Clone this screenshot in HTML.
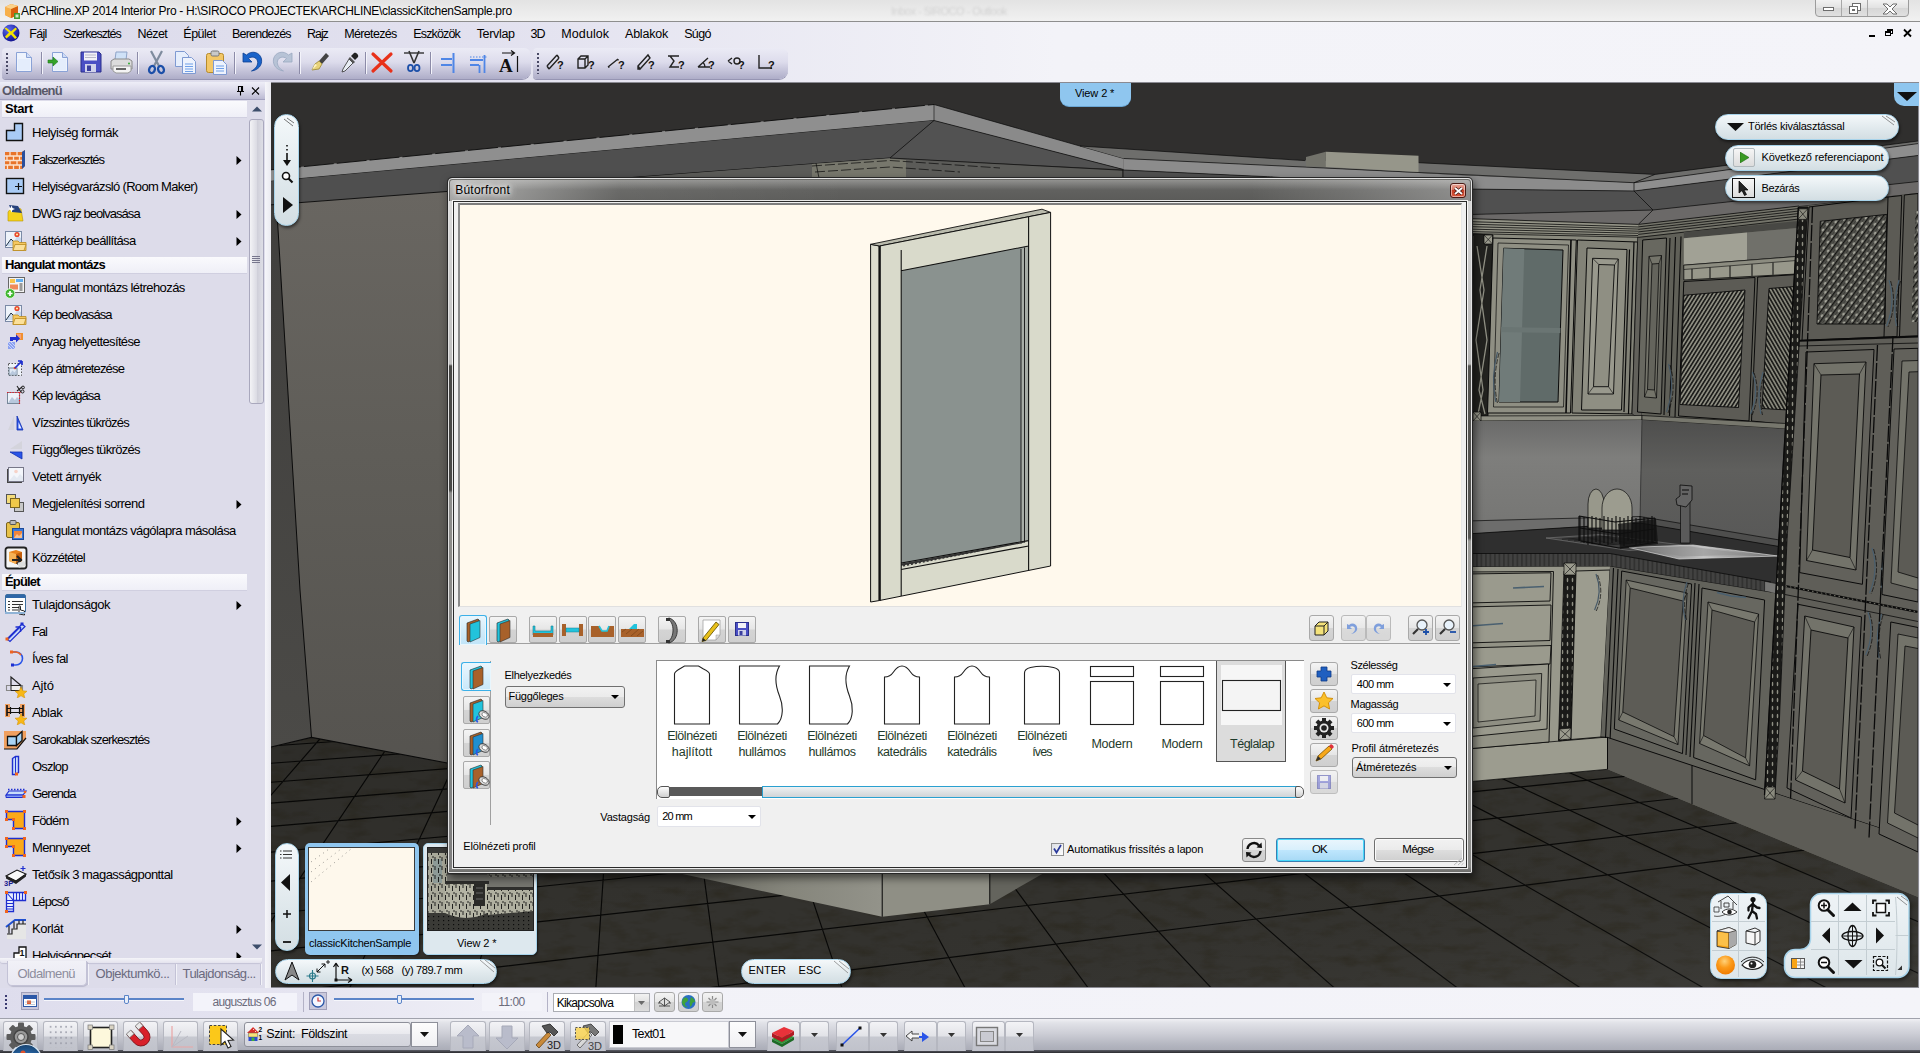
<!DOCTYPE html><html lang="hu"><head><meta charset="utf-8"><title>ARCHline.XP 2014 Interior Pro</title><style>
html,body{margin:0;padding:0;background:#f3f3f8;}
body{width:1920px;height:1053px;position:relative;overflow:hidden;font-family:"Liberation Sans",sans-serif;font-size:12px;color:#000;}
div,span,svg{position:absolute;box-sizing:border-box;}
span{white-space:nowrap;line-height:1;}
.t{font-size:12px;letter-spacing:-0.5px;}
.m{font-size:13px;letter-spacing:-0.5px;}
.d{font-size:11px;letter-spacing:-0.15px;}
.h{font-size:13px;font-weight:bold;letter-spacing:-0.55px;}
.tb{border:1px solid #a9a9a9;border-radius:3px;background:linear-gradient(#f4f4f4 0%,#e6e6e6 48%,#d4d4d4 52%,#cfcfcf 100%);}
.pill{background:linear-gradient(#f4f8fa,#dfe8ec 60%,#d3dee3);border:1.5px solid #a7d3ea;border-radius:14px;box-shadow:1px 2px 3px rgba(0,0,0,.5);}
</style></head><body>
<div style="left:0px;top:0px;width:1920px;height:22px;background:linear-gradient(#e3e3e3,#f1f1f1);border-bottom:1px solid #8e8e8e;"></div>
<span class="t" style="left:891px;top:6px;color:#d2d2d2;filter:blur(1.2px);font-size:11px;">Inbox - SIROCO - Outlook</span>
<svg style="left:3px;top:2px" width="18" height="18" viewBox="0 0 18 18"><path d="M2 5l6-3 7 2v9l-7 3-6-3z" fill="#f28a1c"/><path d="M2 5l6 2v9l-6-3z" fill="#f7b04a"/><path d="M8 7l7-3v9l-7 3z" fill="#d8600c"/><path d="M2 5l6-3 7 2-7 3z" fill="#fbd28a"/><rect x="11" y="11" width="6" height="6" fill="#3f9a2e"/><rect x="12.5" y="12.5" width="3" height="3" fill="#cfe8c8"/></svg>
<span class="t" style="left:21px;top:5px;color:#000;text-shadow:0 0 4px #fff;letter-spacing:-0.32px;">ARCHline.XP 2014 Interior Pro - H:\SIROCO PROJECTEK\ARCHLINE\classicKitchenSample.pro</span>
<div style="left:1815px;top:-1px;width:94px;height:18px;border:1px solid #9c9c9c;border-radius:0 0 4px 4px;background:linear-gradient(#f2f2f2,#e2e2e2 50%,#d6d6d6 50%,#e0e0e0);"></div>
<div style="left:1841px;top:0px;width:1px;height:16px;background:#a8a8a8;"></div>
<div style="left:1867px;top:0px;width:1px;height:16px;background:#a8a8a8;"></div>
<svg style="left:1815px;top:0" width="94" height="17" viewBox="0 0 94 17"><rect x="8.5" y="7.5" width="10" height="3" fill="#fff" stroke="#6d6d6d"/><rect x="37.5" y="3.5" width="8" height="7" fill="#fff" stroke="#6d6d6d"/><rect x="34.5" y="6.5" width="8" height="7" fill="#fff" stroke="#6d6d6d"/><rect x="37" y="9" width="3" height="2" fill="#6d6d6d"/><path d="M68 4l4 0 3 3 3-3 4 0-5 5 5 5-4 0-3-3-3 3-4 0 5-5z" fill="#fff" stroke="#6d6d6d" stroke-width="1"/></svg>
<div style="left:0px;top:22px;width:1920px;height:60px;background:linear-gradient(to right,#dcdbeb 0%,#e2e1ef 25%,#f3f3f8 55%,#f4f4f9 100%);"></div>
<svg style="left:1px;top:23px" width="20" height="20" viewBox="0 0 20 20"><defs><radialGradient id="gb" cx="35%" cy="30%" r="75%"><stop offset="0" stop-color="#5a6af0"/><stop offset="1" stop-color="#10108c"/></radialGradient></defs><circle cx="10" cy="10" r="8.5" fill="url(#gb)"/><path d="M5 4.5l5 4 4.5-4 1.5 1.5-4 4 4 4.5-2 1.5-4-4.5-4.5 4-1.5-2 4-4-4.5-4z" fill="#f5e400"/></svg>
<span class="t" style="left:29.2px;top:28px;font-size:12.5px;letter-spacing:-0.66px;">Fájl</span>
<span class="t" style="left:63.3px;top:28px;font-size:12.5px;letter-spacing:-0.96px;">Szerkesztés</span>
<span class="t" style="left:137.5px;top:28px;font-size:12.5px;letter-spacing:-0.61px;">Nézet</span>
<span class="t" style="left:183.3px;top:28px;font-size:12.5px;letter-spacing:-0.49px;">Épület</span>
<span class="t" style="left:232px;top:28px;font-size:12.5px;letter-spacing:-0.79px;">Berendezés</span>
<span class="t" style="left:307px;top:28px;font-size:12.5px;letter-spacing:-1.05px;">Rajz</span>
<span class="t" style="left:344.2px;top:28px;font-size:12.5px;letter-spacing:-0.65px;">Méretezés</span>
<span class="t" style="left:413.3px;top:28px;font-size:12.5px;letter-spacing:-0.85px;">Eszközök</span>
<span class="t" style="left:476.7px;top:28px;font-size:12.5px;letter-spacing:-0.34px;">Tervlap</span>
<span class="t" style="left:530.4px;top:28px;font-size:12.5px;letter-spacing:-0.89px;">3D</span>
<span class="t" style="left:561.3px;top:28px;font-size:12.5px;letter-spacing:0.09px;">Modulok</span>
<span class="t" style="left:625px;top:28px;font-size:12.5px;letter-spacing:-0.21px;">Ablakok</span>
<span class="t" style="left:684.2px;top:28px;font-size:12.5px;letter-spacing:-0.65px;">Súgó</span>
<svg style="left:1866px;top:27px" width="50" height="12" viewBox="0 0 50 12"><rect x="3" y="8" width="6" height="2" fill="#000"/><rect x="21.5" y="2.5" width="5" height="4" fill="none" stroke="#000"/><rect x="21" y="2" width="6" height="2" fill="#000"/><rect x="19.500" y="4.500" width="5" height="4" fill="#f4f4f9" stroke="#000"/><rect x="19" y="4" width="6" height="2" fill="#000"/><path d="M38 2.500l7 7M45 2.500l-7 7" stroke="#000" stroke-width="1.800"/></svg>
<div style="left:2px;top:48px;width:529px;height:31px;background:linear-gradient(#ebebf5 0%,#dddcec 45%,#c3c2d8 75%,#aeadc8 100%);border-radius:4px 7px 9px 4px;box-shadow:0 1px 0 #9695b3;"></div>
<div style="left:533px;top:48px;width:255px;height:31px;background:linear-gradient(#ebebf5 0%,#dddcec 45%,#c3c2d8 75%,#aeadc8 100%);border-radius:4px 7px 9px 4px;box-shadow:0 1px 0 #9695b3;"></div>
<div style="left:6px;top:53px;width:2px;height:21px;background:repeating-linear-gradient(#4a4a66 0 2px,transparent 2px 4px);"></div>
<div style="left:537px;top:53px;width:2px;height:21px;background:repeating-linear-gradient(#4a4a66 0 2px,transparent 2px 4px);"></div>
<div style="left:41px;top:52px;width:1px;height:22px;background:#8c8ba8;box-shadow:1px 0 0 #f4f4fb;"></div>
<div style="left:137px;top:52px;width:1px;height:22px;background:#8c8ba8;box-shadow:1px 0 0 #f4f4fb;"></div>
<div style="left:234px;top:52px;width:1px;height:22px;background:#8c8ba8;box-shadow:1px 0 0 #f4f4fb;"></div>
<div style="left:299px;top:52px;width:1px;height:22px;background:#8c8ba8;box-shadow:1px 0 0 #f4f4fb;"></div>
<div style="left:365px;top:52px;width:1px;height:22px;background:#8c8ba8;box-shadow:1px 0 0 #f4f4fb;"></div>
<div style="left:430px;top:52px;width:1px;height:22px;background:#8c8ba8;box-shadow:1px 0 0 #f4f4fb;"></div>
<svg style="left:0;top:44px" width="800" height="36" viewBox="0 46 800 36"><g transform="translate(15,53)"><path d="M1.500 1.500h10l5 5v14h-15z" fill="#eef3fd" stroke="#8aa2d6"/><path d="M11.500 1.500v5h5" fill="#cfdcf6" stroke="#8aa2d6"/><path d="M3 8h12v11h-12z" fill="#dfe9fb" opacity=".7"/></g><g transform="translate(51,53)"><path d="M1.500 1.500h10l5 5v14h-15z" fill="#eef3fd" stroke="#8aa2d6"/><path d="M11.500 1.500v5h5" fill="#cfdcf6" stroke="#8aa2d6"/><path d="M3 8h12v11h-12z" fill="#dfe9fb" opacity=".7"/><path d="M-3 9h5v-3l5 4.500-5 4.500v-3h-5z" fill="#35a32c" stroke="#1e7a1a" stroke-width=".6"/></g><g transform="translate(80,53)"><path d="M1 1h18l2 2v18h-20z" fill="#4a4fc4" stroke="#2a2e8c"/><rect x="4" y="1.500" width="13" height="8" fill="#f2f2f8"/><path d="M5 4h11M5 6.500h11" stroke="#b9b9c9"/><rect x="5" y="13" width="11" height="8" fill="#d0d2ea"/><rect x="7" y="14.500" width="4" height="5.500" fill="#3b3f9e"/></g><g transform="translate(110,53)"><path d="M6 1h11l-1 8h-11z" fill="#cfe1f7" stroke="#8fa4c8"/><path d="M1 10l3-2h15l3 2v8h-21z" fill="#dcdcdc" stroke="#8a8a8a"/><path d="M3 15h18v5l-3 2h-12l-3-2z" fill="#f4f4f4" stroke="#9a9a9a"/><rect x="6" y="17" width="10" height="2" fill="#666"/><circle cx="19" cy="12.500" r="1" fill="#3a3"/></g><g transform="translate(146,52)" fill="none"><path d="M5 1l8 15M16 1l-8 15" stroke="#7f8c9e" stroke-width="2.200"/><ellipse cx="6" cy="19.500" rx="2.800" ry="3.600" stroke="#1c4fa8" stroke-width="2.300" transform="rotate(25 6 19.500)"/><ellipse cx="15" cy="19.500" rx="2.800" ry="3.600" stroke="#1c4fa8" stroke-width="2.300" transform="rotate(-25 15 19.500)"/></g><g transform="translate(174,52)"><path d="M1.500 1.500h9l4 4v11h-13z" fill="#e6eefc" stroke="#7f9ad2"/><path d="M8.500 7.500h9l4 4v12h-13z" fill="#eef3fd" stroke="#7f9ad2"/><path d="M11 14h8M11 16.500h8M11 19h8M11 21.500h8" stroke="#6fa0e8" stroke-width="1.200"/></g><g transform="translate(205,52)"><rect x="1.500" y="3.500" width="17" height="19" rx="2" fill="#f3c766" stroke="#b68b2c"/><rect x="6" y="1" width="8" height="5" rx="1.500" fill="#c9c9c9" stroke="#777"/><path d="M8.500 10.500h9l4 4v10h-13z" fill="#eef3fd" stroke="#7f9ad2"/><path d="M11 16h8M11 18.500h8M11 21h8" stroke="#6fa0e8" stroke-width="1.200"/></g><g transform="translate(240,52)"><path d="M3 3v9h9l-3.500-3.500c3-2.500 8-1.500 9 2.500 1 4-2 8-6 10 7-1 11-6 10-12-1.500-7-10-9-15-4z" fill="#1a63c9" stroke="#0d3f92" stroke-width=".8"/></g><g transform="translate(271,52)"><path d="M21 3v9h-9l3.500-3.500c-3-2.500-8-1.500-9 2.500-1 4 2 8 6 10-7-1-11-6-10-12 1.500-7 10-9 15-4z" fill="#b7c3d6" stroke="#9aa8c0" stroke-width=".8"/></g><g transform="translate(309,54)"><path d="M17 1l3 3-7 8-3-3z" fill="#444"/><path d="M10 9l3 3-3 5-7 1 3-6z" fill="#e8d27a" stroke="#9b8630" stroke-width=".8"/><path d="M3 18l3-6 2 1z" fill="#fff7c8"/></g><g transform="translate(340,54)"><path d="M14 1c2-1 5 2 4 4l-3 3-4-4z" fill="#222"/><path d="M10 5l5 5-1.500 1.500-5-5z" fill="#555"/><path d="M9 7l4 4-8 8-3 1 1-3z" fill="#e9eef5" stroke="#444" stroke-width=".9"/></g><path d="M373 56l18 17M391 56l-18 17" stroke="#e8311a" stroke-width="3.200" stroke-linecap="round"/><g transform="translate(403,52)" fill="none"><path d="M1 3h20" stroke="#222" stroke-width="1.300"/><path d="M6 1l5 12M16 1l-5 12" stroke="#333" stroke-width="1.600"/><ellipse cx="7.500" cy="18" rx="2.500" ry="3.200" stroke="#1c4fa8" stroke-width="1.800"/><ellipse cx="14" cy="18" rx="2.500" ry="3.200" stroke="#1c4fa8" stroke-width="1.800"/></g><path d="M441 61h11M441 67h11M453.500 55v20" stroke="#4f86e6" stroke-width="2" fill="none"/><path d="M470 62h13M470 67h9M484.500 57v18M479.500 67v8" stroke="#4f86e6" stroke-width="1.800" fill="none"/><path d="M470 59h18" stroke="#4f86e6" stroke-width="1" stroke-dasharray="1.500 1.500"/><text x="499" y="74" font-family="Liberation Serif,serif" font-weight="bold" font-size="19" fill="#111">A</text><path d="M502 55h12m-3-2.500l3.500 2.500-3.500 2.500M517.500 58v16" stroke="#111" stroke-width="1.200" fill="none" stroke-dasharray="20 0"/><g transform="translate(546,54)"><path d="M1 14l10-11M3 17l10-11M1 14l2 3M11 3l2 3" stroke="#222" stroke-width="1.400" fill="none"/><text x="11" y="17" font-family="Liberation Sans,sans-serif" font-weight="bold" font-size="11" fill="#111">?</text></g><g transform="translate(577,54)"><path d="M1 7l3-3h7v9l-3 3h-7zM1 7h7v9M8 7l3-3" stroke="#222" stroke-width="1.400" fill="none"/><text x="11" y="17" font-family="Liberation Sans,sans-serif" font-weight="bold" font-size="11" fill="#111">?</text></g><g transform="translate(607,54)"><path d="M1 15l10-8M1 15l1.500 0M11 7l0 1.500" stroke="#222" stroke-width="1.400" fill="none"/><text x="11" y="17" font-family="Liberation Sans,sans-serif" font-weight="bold" font-size="11" fill="#111">?</text></g><g transform="translate(637,54)"><path d="M1 14l10-11 2 3-10 11zM1 14v3h2" stroke="#222" stroke-width="1.400" fill="none"/><text x="11" y="17" font-family="Liberation Sans,sans-serif" font-weight="bold" font-size="11" fill="#111">?</text></g><g transform="translate(667,54)"><path d="M1 4h11M3 4l4 5-4 6h9" stroke="#222" stroke-width="1.400" fill="none"/><text x="11" y="17" font-family="Liberation Sans,sans-serif" font-weight="bold" font-size="11" fill="#111">?</text></g><g transform="translate(697,54)"><path d="M1 15l10-9M1 15h12M8 15a6 6 0 0 0-2-4.500" stroke="#222" stroke-width="1.400" fill="none"/><text x="11" y="17" font-family="Liberation Sans,sans-serif" font-weight="bold" font-size="11" fill="#111">?</text></g><g transform="translate(727,54)"><path d="M1 9l4-3M1 9l4 3M7 9a3 3 0 1 0 6 0 3 3 0 1 0-6 0" stroke="#222" stroke-width="1.400" fill="none"/><text x="11" y="17" font-family="Liberation Sans,sans-serif" font-weight="bold" font-size="11" fill="#111">?</text></g><g transform="translate(757,54)"><path d="M2 3v13h13M5.500 12.500v.1" stroke="#222" stroke-width="1.400" fill="none"/><text x="11" y="17" font-family="Liberation Sans,sans-serif" font-weight="bold" font-size="11" fill="#111">?</text></g></svg>
<svg style="left:0;top:0" width="1920" height="1053" viewBox="0 0 1920 1053"><defs><clipPath id="vp"><rect x="271" y="82" width="1647" height="905"/></clipPath><pattern id="lat" width="3.300" height="6" patternUnits="userSpaceOnUse" patternTransform="rotate(32)"><rect width="3.300" height="6" fill="#8e8e82"/><rect width="1.600" height="6" fill="#1a1a18"/></pattern><pattern id="lat2" width="3.300" height="6" patternUnits="userSpaceOnUse" patternTransform="rotate(-30)"><rect width="3.300" height="6" fill="#86867a"/><rect width="1.600" height="6" fill="#1a1a18"/></pattern><pattern id="lat3" width="5.500" height="7" patternUnits="userSpaceOnUse" patternTransform="rotate(36)"><rect width="5.500" height="7" fill="#595953"/><rect width="1.300" height="7" fill="#141412"/><rect x="2.600" width=".700" height="7" fill="#2c2c29"/><ellipse cx="4" cy="3.500" rx="1" ry="1.700" fill="#aeaea2"/></pattern><pattern id="rope" width="4.500" height="14" patternUnits="userSpaceOnUse"><rect width="4.500" height="14" fill="#424241"/><rect width="1.800" height="14" fill="#323231"/></pattern><pattern id="dots" width="5" height="8" patternUnits="userSpaceOnUse"><rect width="5" height="8" fill="#1a1a18"/><ellipse cx="2.500" cy="4" rx=".800" ry="2.200" fill="#8e8e82"/></pattern><linearGradient id="lw" gradientUnits="userSpaceOnUse" x1="0" y1="190" x2="0" y2="780"><stop offset="0" stop-color="#696661"/><stop offset=".45" stop-color="#5f5d58"/><stop offset="1" stop-color="#55534f"/></linearGradient><linearGradient id="lws" gradientUnits="userSpaceOnUse" x1="0" y1="200" x2="0" y2="750"><stop offset="0" stop-color="#403f3d"/><stop offset="1" stop-color="#4b4a47"/></linearGradient><linearGradient id="isl" x1="0" y1="0" x2="1" y2="0"><stop offset="0" stop-color="#55554f"/><stop offset=".6" stop-color="#85857b"/><stop offset="1" stop-color="#93938a"/></linearGradient><linearGradient id="sink" x1="0" y1="0" x2="1" y2="0"><stop offset="0" stop-color="#5a5a5a"/><stop offset=".5" stop-color="#c4c4c4"/><stop offset="1" stop-color="#6a6a6a"/></linearGradient><linearGradient id="bs1" x1="0" y1="0" x2="0" y2="1"><stop offset="0" stop-color="#6a6a69"/><stop offset=".35" stop-color="#7e7e7c"/><stop offset="1" stop-color="#767674"/></linearGradient><linearGradient id="bs2" x1="0" y1="0" x2="0" y2="1"><stop offset="0" stop-color="#4e4e4d"/><stop offset=".4" stop-color="#5f5f5d"/><stop offset="1" stop-color="#585857"/></linearGradient><linearGradient id="flg" x1="0" y1="0" x2="1" y2="1"><stop offset="0" stop-color="#000" stop-opacity=".12"/><stop offset=".5" stop-color="#000" stop-opacity="0"/><stop offset="1" stop-color="#fff" stop-opacity=".05"/></linearGradient><filter id="mar" x="0" y="0" width="100%" height="100%" color-interpolation-filters="sRGB"><feTurbulence type="fractalNoise" baseFrequency="0.035 0.09" numOctaves="4" seed="11"/><feColorMatrix values="0 0 0 0 0.13  0 0 0 0 0.11  0 0 0 0 0.05  1.8 0 0 0 -0.85"/></filter></defs><g clip-path="url(#vp)"><rect x="271" y="82" width="1647" height="905" fill="#302f2e"/><rect x="271" y="725" width="1647" height="262" fill="#33322e"/><rect x="271" y="725" width="1647" height="262" filter="url(#mar)" opacity=".45"/><path d="M271 1042.8L1918 835.8M271 993.5L1918 801.7M271 950.9L1918 772.3M271 913.8L1918 746.6M271 881.1L1918 724.1M271 852.2L1918 704.1M271 826.4L1918 686.3M271 803.2L1918 670.3M271 782.3L1918 655.8M271 763.3L1918 642.7M271 746L1918 630.7M271 730.2L1918 619.8M271 715.7L1918 609.8M271 702.3L1918 600.5M271 689.9L1918 591.9M271 678.4L1918 584M261.6 725L-21.8 990M332 725L101.7 990M402.3 725L225.2 990M472.7 725L348.7 990M543.1 725L472.2 990M613.5 725L595.7 990M683.8 725L719.2 990M754.2 725L842.7 990M824.6 725L966.2 990M895 725L1089.7 990M965.3 725L1213.2 990M1035.7 725L1336.7 990M1106.1 725L1460.2 990M1176.4 725L1583.7 990M1246.8 725L1707.2 990M1317.2 725L1830.7 990M1387.6 725L1954.2 990M1457.9 725L2077.7 990M1528.3 725L2201.2 990M1598.7 725L2324.7 990M1669 725L2448.2 990M1739.4 725L2571.7 990M1809.8 725L2695.2 990M1880.2 725L2818.7 990M1950.5 725L2942.2 990" fill="none" stroke="#080807" stroke-width="1.15" /><rect x="271" y="725" width="1647" height="262" fill="url(#flg)"/><path d="M271 200L448 188L1080 188L1080 800L447.2 763L311.5 737.4L271 747Z" fill="url(#lw)" /><path d="M271 204.8L276.5 204.4L300 590L311.5 737.4L271 747Z" fill="url(#lws)" /><path d="M276.5 204.4L300 590L311.5 737.4" fill="none" stroke="#0a0a0a" stroke-width="1" /><path d="M271 747L311.5 737.4L447.2 763L640 800" fill="none" stroke="#0a0a0a" stroke-width="1.1" /><path d="M271 169.8L934 104.5L934 120.5L271 181.3Z" fill="#8f8f8f" /><path d="M271 169.8L934 104.5" fill="none" stroke="#0a0a0a" stroke-width="0.9" stroke-dasharray="30 3"/><path d="M271 181.3L934 120.5" fill="none" stroke="#0a0a0a" stroke-width="0.8" /><path d="M271 181.3L934 120.5L890 158L271 204.8Z" fill="#4f4f4f" /><path d="M271 204.8L890 158" fill="none" stroke="#0a0a0a" stroke-width="0.9" /><path d="M600 180L890 158L1122 170.3L1122 182L600 182Z" fill="#5b5b58" /><path d="M812 164L890 158.5L906 160L906 178L812 178Z" fill="#77776c" /><path d="M812 166L890 160.5L1000 168M815 172L890 167L960 172" fill="none" stroke="#0a0a0a" stroke-width="0.7" stroke-dasharray="10 3"/><path d="M816 163L819 178" fill="none" stroke="#0a0a0a" stroke-width="0.7" /><path d="M934 104.5L1123.8 158.5L1123.8 169.6L934 120.5Z" fill="#8a8a8a" /><path d="M934 104.5L1123.8 158.5" fill="none" stroke="#0a0a0a" stroke-width="0.7" /><path d="M934 104.5L934 120.5" fill="none" stroke="#0a0a0a" stroke-width="0.6" /><path d="M934 120.5L1123.8 169.6L890 158Z" fill="#525252" /><path d="M934 120.5L890 158M890 158L1123.8 170.3M934 120.5L1123.8 169.6" fill="none" stroke="#0a0a0a" stroke-width="0.7" /><path d="M640 860L683.5 874.2L882.2 916.8L882.2 860Z" fill="url(#isl)" /><path d="M882.2 860L989.8 860L989.8 904.2L882.2 916.8Z" fill="#8f8f85" /><path d="M989.8 860L1070 860L1044 873L989.8 904.2Z" fill="#64645d" /><path d="M882.2 860L882.2 916.8M989.8 860L989.8 904.2" fill="none" stroke="#0a0a0a" stroke-width="1" /><path d="M1080 146L1305 160.6L1418.5 162.7L1655 174.4L1634 182.7L1466 175.5L1305 167L1123.8 158.5Z" fill="#6e6e6c" /><path d="M1123.8 158.5L1305 167L1466 175.5L1634 182.7L1634 191L1466 189L1267.5 176.7L1123.8 170Z" fill="#8c8c8c" /><path d="M1123.8 170L1267.5 176.7L1466 189L1634 191L1653 210L1466 214.6L1123.8 200Z" fill="#505050" /><path d="M1466 214.6L1653 210L1638.3 224.4L1466 218.5Z" fill="#6b6968" /><path d="M1080 146L1305 160.6M1418.5 162.7L1655 174.4M1123.8 158.5L1634 182.7M1123.8 170L1267.5 176.7L1466 189L1634 191M1466 214.6L1653 210" fill="none" stroke="#0a0a0a" stroke-width="0.7" /><path d="M1306 157L1325.8 151.7L1325.8 166.9L1306 166.3Z" fill="#72726a" /><path d="M1325.8 151.7L1418.5 155.8L1418.5 172L1325.8 166.9Z" fill="#96968a" /><path d="M1655 174.4L1918 141L1918 143.6L1634 182.7Z" fill="#6e6e6c" /><path d="M1634 182.7L1918 143.6L1918 155.5L1634 191Z" fill="#8e8e8e" /><path d="M1634 191L1918 155.5L1918 181.5L1653 210Z" fill="#505050" /><path d="M1653 210L1918 181.5L1918 193L1799 206L1638.3 224.4Z" fill="#6b6968" /><path d="M1655 174.4L1918 141M1634 182.7L1918 143.6M1634 191L1918 155.5M1653 210L1918 181.5M1634 182.7L1634 191L1653 210L1638.3 224.4M1655 174.4L1634 182.7" fill="none" stroke="#0a0a0a" stroke-width="0.7" /><path d="M1466 218.5L1638.3 224.4L1642 420L1466 421Z" fill="#8a8a7e" /><path d="M1466 218.5L1638.3 224.4L1638.3 237L1466 233.6Z" fill="#939386" /><path d="M1466 218.5L1638.3 224.4M1466 221.5L1638.3 227M1466 224L1638.3 229.1M1466 226.5L1638.3 231.2M1466 229L1638.3 233.3M1466 231.5L1638.3 235.5M1466 233.5L1638.3 237.2" fill="none" stroke="#0a0a0a" stroke-width="0.8" /><path d="M1473.5 234L1493 235L1488 416L1470 416Z" fill="#22221f" stroke="#0a0a0a" stroke-width="0.8" /><path d="M1484 235L1492.5 235L1492.5 244L1484 244Z" fill="#9a9a8d" stroke="#0a0a0a" stroke-width="0.7" /><path d="M1484 235L1492.5 244M1492.5 235L1484 244" fill="none" stroke="#0a0a0a" stroke-width="0.6" /><path d="M1477 246L1484 290L1476 340L1483 390L1478 414M1487 246L1480 290L1487 340L1479 390L1485 414" fill="none" stroke="#8f8f83" stroke-width="1.3" /><path d="M1466 236L1473.5 236L1471 416L1466 416Z" fill="#55554f" /><path d="M1493 238L1576.3 240L1570.5 413L1487.5 413Z" fill="#8f8f83" stroke="#0a0a0a" stroke-width="1" /><path d="M1503.6 248.2L1563 250L1558 402L1499 402Z" fill="#606b69" stroke="#0a0a0a" stroke-width="1" /><path d="M1503.6 248.2L1524.3 249L1520 402L1499 402Z" fill="#707b79" /><path d="M1501.3 327L1560.5 328L1560.3 333L1501.1 332Z" fill="#6a7573" /><path d="M1498 243L1568.5 245L1563.5 407L1493.5 407L1498 243" fill="none" stroke="#0a0a0a" stroke-width="0.7" /><path d="M1497.5 352q-7 25 -1.7 50" fill="none" stroke="#465866" stroke-width="1.200"/><path d="M1499.1 353q-7 25 -1.7 50" fill="none" stroke="#0a0a0a" stroke-width=".7" stroke-dasharray="5 1.500"/><path d="M1571 240L1566 413M1581.5 240L1576 413" fill="none" stroke="#0a0a0a" stroke-width="1.6" /><path d="M1577.5 240L1637.7 242L1632 414L1572 413Z" fill="#828277" stroke="#0a0a0a" stroke-width="1" /><path d="M1587 248L1627 249.5L1621.5 410L1581.5 410Z" fill="#8f8f83" stroke="#0a0a0a" stroke-width="1" /><path d="M1592.6 258.3L1618.3 259L1613.5 394L1588 394Z" fill="#99998d" stroke="#0a0a0a" stroke-width="0.9" /><path d="M1598.8 264.5L1614.5 265L1608.5 386.7L1593.5 386.7Z" fill="#8f8f83" stroke="#0a0a0a" stroke-width="0.9" /><path d="M1592.6 258.3L1598.8 264.5M1618.3 259L1614.5 265M1613.5 394L1608.5 386.7M1588 394L1593.5 386.7" fill="none" stroke="#0a0a0a" stroke-width="0.6" /><path d="M1629.5 249.5L1624 412M1634 242L1628.5 414" fill="none" stroke="#0a0a0a" stroke-width="1.2" /><path d="M1637.7 237L1642.7 237L1642 420L1632 414Z" fill="#62615b" stroke="#0a0a0a" stroke-width="0.7" /><path d="M1638.3 224.4L1799 206L1792 436L1642 420Z" fill="#606058" /><path d="M1638.3 224.4L1799 206L1799 219L1638.3 237Z" fill="#74746a" /><path d="M1638.3 224.4L1799 206M1638.3 226.9L1799 208.5M1638.3 229.4L1799 211M1638.3 231.9L1799 213.5M1638.3 234.4L1799 216M1638.3 237.4L1799 219" fill="none" stroke="#0a0a0a" stroke-width="0.8" /><path d="M1642.7 240L1666.5 238L1661 414L1637.5 412Z" fill="#686860" stroke="#0a0a0a" stroke-width="1" /><path d="M1649 256.4L1661.5 255.5L1656.5 398L1644.5 397Z" fill="#74746a" stroke="#0a0a0a" stroke-width="0.8" /><path d="M1652 264L1659 263.5L1654.5 390L1647.5 389.5Z" fill="#64645c" stroke="#0a0a0a" stroke-width="0.8" /><path d="M1649 256.4L1652 264M1661.5 255.5L1659 263.5M1656.5 398L1654.5 390M1644.5 397L1647.5 389.5" fill="none" stroke="#0a0a0a" stroke-width="0.6" /><path d="M1670 238L1664 415M1675.5 237L1669.5 416M1681 236.5L1675 417" fill="none" stroke="#0a0a0a" stroke-width="1.1" /><path d="M1668.5 364q7 24 -2.1 48" fill="none" stroke="#465866" stroke-width="1.200"/><path d="M1670.1 365q7 24 -2.1 48" fill="none" stroke="#0a0a0a" stroke-width=".7" stroke-dasharray="5 1.500"/><path d="M1683.8 232L1798 221L1798 228L1683.8 238.2Z" fill="#484844" /><path d="M1683.8 238.2L1747 232.5L1747 261L1683.8 265.2Z" fill="#a1a195" /><path d="M1747 232.5L1797 228L1796.5 256.5L1747 261Z" fill="#70706a" /><path d="M1683.8 265.2L1796.5 256.5L1796.5 274L1683.8 280Z" fill="#98988b" stroke="#0a0a0a" stroke-width="0.8" /><path d="M1683.8 265.2L1796.5 256.5L1796.5 260.5L1683.8 269.5Z" fill="#8c8c80" stroke="#0a0a0a" stroke-width="0.6" /><path d="M1692 268.9L1692 279.1M1710 267.5L1710 278.1M1730 265.9L1730 277.1M1752 264.2L1752 275.9M1773 262.6L1773 274.8" fill="none" stroke="#0a0a0a" stroke-width="1" /><path d="M1683.8 281.5L1755 277.5L1749 421L1678.5 416Z" fill="#5c5b55" stroke="#0a0a0a" stroke-width="1" /><path d="M1683.8 295.3L1745 290L1738.5 407.5L1680 404.5Z" fill="url(#lat)" stroke="#0a0a0a" stroke-width="0.9" /><path d="M1757.7 277L1797 274.5L1789.5 425L1751.5 421Z" fill="#5c5b55" stroke="#0a0a0a" stroke-width="1" /><path d="M1769 288.5L1795 286.5L1788 410L1762 408.5Z" fill="url(#lat2)" stroke="#0a0a0a" stroke-width="0.9" /><path d="M1752.5 372q7 21 -2 42" fill="none" stroke="#4a5f6e" stroke-width="1.200"/><path d="M1754.1 373q7 21 -2 42" fill="none" stroke="#0a0a0a" stroke-width=".7" stroke-dasharray="5 1.500"/><path d="M1763 372q-7 21 -2.1 42" fill="none" stroke="#4a5f6e" stroke-width="1.200"/><path d="M1764.6 373q-7 21 -2.1 42" fill="none" stroke="#0a0a0a" stroke-width=".7" stroke-dasharray="5 1.500"/><path d="M1466 416L1642 415.5L1642 420L1466 421Z" fill="#8f8f83" stroke="#0a0a0a" stroke-width="0.7" /><path d="M1642 415.5L1786 423.5L1785.5 429L1642 420Z" fill="#77776d" stroke="#0a0a0a" stroke-width="0.7" /><path d="M1473 412L1481 412L1481 421L1473 421Z" fill="#9a9a8d" stroke="#0a0a0a" stroke-width="0.7" /><path d="M1473 412L1481 421M1481 412L1473 421" fill="none" stroke="#0a0a0a" stroke-width="0.6" /><path d="M1466 421L1642 420L1640 521L1466 527Z" fill="url(#bs1)" /><path d="M1642 420L1785.5 429L1779 545L1640 521Z" fill="url(#bs2)" /><path d="M1642 420L1640 521" fill="none" stroke="#333" stroke-width="0.8" /><path d="M1466 521L1640 516.5L1640 523L1466 534Z" fill="#6d6d6c" /><path d="M1640 516.5L1779.5 540L1779 546.5L1640 523Z" fill="#4e4e4d" /><path d="M1466 534L1640 523L1779 546.5L1778 585L1771 582L1610 553.5L1466 553.5Z" fill="#2f2f2f" /><path d="M1466 534L1640 523L1779 546.5" fill="none" stroke="#0a0a0a" stroke-width="0.8" /><path d="M1466 521L1640 516.5L1779.5 540" fill="none" stroke="#0a0a0a" stroke-width="0.7" /><path d="M1546 538L1600 534.5L1694 546.5L1629 550.5Z" fill="#3e3e3e" stroke="#8a8a8a" stroke-width="0.5" /><path d="M1562 539.2L1612 536M1568 540.1L1618 536.8M1574 540.9L1624 537.6M1580 541.8L1630 538.4M1586 542.6L1636 539.2M1592 543.5L1642 540M1598 544.4L1648 540.8M1604 545.2L1654 541.6" fill="none" stroke="#1a1a1a" stroke-width="0.8" /><path d="M1629 547.5L1693 545L1778 556L1679 559Z" fill="url(#sink)" stroke="#d8d8d8" stroke-width="0.7" /><path d="M1640 548.5L1690 546.6L1752 554.5L1682 556.5Z" fill="#8a8a8a" stroke="none" stroke-width="0" opacity=".5"/><path d="M1466 553.5L1610 553.5L1610 566.5L1466 567Z" fill="url(#rope)" /><path d="M1610 553.5L1771 582L1771 592.5L1610 566.5Z" fill="url(#rope)" /><path d="M1764.6 581.2L1778 584L1778 594L1764.6 591.5Z" fill="#767674" stroke="#0a0a0a" stroke-width="0.5" /><path d="M1466 553.5L1610 553.5L1771 582M1466 567L1610 566.5L1771 592.5" fill="none" stroke="#0a0a0a" stroke-width="0.8" /><path d="M1588 528v-24a8 15 0 0 1 16 0v24z" fill="#98988b" stroke="#0a0a0a" stroke-width=".7"/><path d="M1602 530v-22a15 19 0 0 1 30 0v22z" fill="#9c9c8f" stroke="#0a0a0a" stroke-width=".7"/><g stroke="#0c0c0c" stroke-width="1.100" fill="none"><path d="M1580 516v25"/><path d="M1584 517v26"/><path d="M1588 518v27"/><path d="M1592 516v28"/><path d="M1596 517v25"/><path d="M1600 518v26"/><path d="M1604 516v27"/><path d="M1608 517v28"/><path d="M1612 518v25"/><path d="M1616 516v26"/><path d="M1620 517v27"/><path d="M1624 518v28"/><path d="M1628 516v25"/><path d="M1632 517v26"/><path d="M1636 518v27"/><path d="M1640 516v28"/><path d="M1644 517v25"/><path d="M1648 518v26"/><path d="M1652 516v27"/><path d="M1579 516l36 6 40-4M1581 541l38 7 38-6M1580 528l38 6 36-5M1579 516v25M1655 518v23"/></g><path d="M1618 524L1656 519L1658 544L1620 549Z" fill="#101010" stroke="none" stroke-width="0" opacity=".75"/><path d="M1680.5 500L1690 500L1690 543L1680.5 543Z" fill="#5a5a5a" stroke="#0a0a0a" stroke-width="0.7" /><path d="M1680 485L1692 486L1692 500L1686 507L1677 505L1676 499L1680 496Z" fill="#646464" stroke="#0a0a0a" stroke-width="0.8" /><path d="M1682 490L1689 490M1682 494L1688 494" fill="none" stroke="#0a0a0a" stroke-width="1" /><path d="M1466 567L1610 566.5L1602 716L1601 737L1607.5 737L1607.5 769.3L1466 782Z" fill="#98988b" /><path d="M1466 749L1607.5 737L1607.5 769.3L1466 782Z" fill="#9c9c8f" stroke="#0a0a0a" stroke-width="0.8" /><path d="M1466 572L1553.5 571.5L1549 742L1466 749Z" fill="#939386" stroke="#0a0a0a" stroke-width="0.9" /><path d="M1466 574L1551 572.8L1550 601L1466 603Z" fill="#9a9a8d" stroke="#0a0a0a" stroke-width="0.9" /><path d="M1466 607L1551 605L1550 640.5L1466 643Z" fill="#9a9a8d" stroke="#0a0a0a" stroke-width="0.9" /><path d="M1466 648L1551 645.5L1550 664L1466 667Z" fill="#9a9a8d" stroke="#0a0a0a" stroke-width="0.9" /><path d="M1466 669L1548.5 664L1547 729L1466 737Z" fill="#9a9a8d" stroke="#0a0a0a" stroke-width="0.9" /><path d="M1473 678L1541.7 673.5L1540 721L1473 728Z" fill="#8f8f83" stroke="#0a0a0a" stroke-width="0.8" /><path d="M1478 684L1536 680L1535 716L1478 722Z" fill="#9a9a8d" stroke="#0a0a0a" stroke-width="0.7" /><path d="M1513 588L1544 586.5M1470 626L1503 623.5M1473 666.5L1496 664.5" fill="none" stroke="#4a6070" stroke-width="1.6" /><path d="M1564 571L1576 571L1571 739.5L1558.5 741Z" fill="url(#dots)" stroke="#0a0a0a" stroke-width="0.8" /><path d="M1564 563L1576 563L1576 575L1564 575Z" fill="#9a9a8d" stroke="#0a0a0a" stroke-width="0.7" /><path d="M1564 563L1576 575M1576 563L1564 575" fill="none" stroke="#0a0a0a" stroke-width="0.6" /><path d="M1559.3 729L1571.3 728L1571 739L1559 740Z" fill="#9a9a8d" stroke="#0a0a0a" stroke-width="0.7" /><path d="M1559.3 729L1571 739M1571.3 728L1559 740" fill="none" stroke="#0a0a0a" stroke-width="0.6" /><path d="M1576 571L1610 570L1601 737L1571 739.5Z" fill="#9c9c8f" stroke="#0a0a0a" stroke-width="0.9" /><path d="M1596 574q7 18 -1.4 36" fill="none" stroke="#465866" stroke-width="1.200"/><path d="M1597.6 575q7 18 -1.4 36" fill="none" stroke="#0a0a0a" stroke-width=".7" stroke-dasharray="5 1.500"/><path d="M1610 566.5L1771 592.5L1778 594L1787 597L1798.4 207L1918 193L1918 897L1607.5 769.3L1607.5 737L1601 737Z" fill="#62625b" /><path d="M1613.5 568L1605.5 738M1618 569L1610 741" fill="none" stroke="#0a0a0a" stroke-width="1.1" /><path d="M1621.7 571L1691.6 584L1682.5 753.6L1614.3 729Z" fill="#676760" stroke="#0a0a0a" stroke-width="1" /><path d="M1626.2 580L1687.1 593L1678 744.6L1618.8 720Z" fill="#78786e" stroke="#0a0a0a" stroke-width="0.8" /><path d="M1630.2 588L1683.1 601L1674 736.6L1622.8 712Z" fill="#5d5c56" stroke="#0a0a0a" stroke-width="0.8" /><path d="M1626.2 580L1630.2 588M1687.1 593L1683.1 601M1678 744.6L1674 736.6M1618.8 720L1622.8 712" fill="none" stroke="#0a0a0a" stroke-width="0.6" /><path d="M1702 588L1764.6 600L1755.6 779.8L1693.6 757.5Z" fill="#676760" stroke="#0a0a0a" stroke-width="1" /><path d="M1708 602L1758.6 614L1749.6 765.8L1699.6 743.5Z" fill="#78786e" stroke="#0a0a0a" stroke-width="0.8" /><path d="M1712 610L1754.6 622L1745.6 757.8L1703.6 735.5Z" fill="#5d5c56" stroke="#0a0a0a" stroke-width="0.8" /><path d="M1708 602L1712 610M1758.6 614L1754.6 622M1749.6 765.8L1745.6 757.8M1699.6 743.5L1703.6 735.5" fill="none" stroke="#0a0a0a" stroke-width="0.6" /><path d="M1695 583L1686 755M1699 584L1690 757" fill="none" stroke="#0a0a0a" stroke-width="1.1" /><path d="M1687 582q-7 19 -1.7 38" fill="none" stroke="#465866" stroke-width="1.200"/><path d="M1688.6 583q-7 19 -1.7 38" fill="none" stroke="#0a0a0a" stroke-width=".7" stroke-dasharray="5 1.500"/><path d="M1717 592.5L1731 596L1746 597.5" fill="none" stroke="#4a6070" stroke-width="1.6" /><path d="M1607.5 737.4L1918 840.3L1918 897L1607.5 769.3Z" fill="#5d5c56" /><path d="M1601 737L1607.5 737.4L1918 840.3M1607.5 737L1607.5 769.3M1692 765.5L1692 804" fill="none" stroke="#0a0a0a" stroke-width="1" /><path d="M1798.4 207L1918 193L1918 840.3L1764 789Z" fill="#5f5e58" /><path d="M1798.4 207L1807.8 207L1787 540L1779.6 716L1775 795L1764.5 795L1768.8 716L1778.8 540Z" fill="url(#dots)" stroke="#0a0a0a" stroke-width="0.8" /><path d="M1798.4 208.8L1807.8 208.8L1807.2 219.4L1797.8 219.4Z" fill="#8a8a7e" stroke="#0a0a0a" stroke-width="0.7" /><path d="M1798.4 208.8L1807.2 219.4M1807.8 208.8L1797.8 219.4" fill="none" stroke="#0a0a0a" stroke-width="0.6" /><path d="M1765 787L1775.5 787L1775 799L1764.5 799Z" fill="#8a8a7e" stroke="#0a0a0a" stroke-width="0.7" /><path d="M1765 787L1775 799M1775.5 787L1764.5 799" fill="none" stroke="#0a0a0a" stroke-width="0.6" /><path d="M1809 207L1888 197L1901.8 195.5L1897 336.5L1802 340.5Z" fill="#5c5b55" stroke="#0a0a0a" stroke-width="1" /><path d="M1820.3 221.3L1886.8 214.4L1885 324L1817 324Z" fill="url(#lat3)" stroke="#0a0a0a" stroke-width="0.9" /><path d="M1888 197L1884 337" fill="none" stroke="#0a0a0a" stroke-width="1" /><path d="M1904.3 195L1918 193.5L1918 336L1899.5 336.5Z" fill="#5c5b55" stroke="#0a0a0a" stroke-width="1" /><path d="M1915.6 211L1918 210.7L1918 322L1911.5 322Z" fill="url(#lat3)" /><path d="M1889 280q7 23 -2.6 46" fill="none" stroke="#4a5f6e" stroke-width="1.200"/><path d="M1890.6 281q7 23 -2.6 46" fill="none" stroke="#0a0a0a" stroke-width=".7" stroke-dasharray="5 1.500"/><path d="M1899 280q-7 23 -2.6 46" fill="none" stroke="#4a5f6e" stroke-width="1.200"/><path d="M1900.6 281q-7 23 -2.6 46" fill="none" stroke="#0a0a0a" stroke-width=".7" stroke-dasharray="5 1.500"/><path d="M1799 340.7L1918 336.6" fill="none" stroke="#0a0a0a" stroke-width="2" /><path d="M1798.5 346L1918 343" fill="none" stroke="#0a0a0a" stroke-width="0.8" /><path d="M1806 352L1874 349.5L1862.4 584.3L1799.7 572.6Z" fill="#62615b" stroke="#0a0a0a" stroke-width="1" /><path d="M1814 363.7L1866 362L1856 570L1806.5 560.5Z" fill="#73736a" stroke="#0a0a0a" stroke-width="0.9" /><path d="M1821 375L1859.5 374L1850 557.5L1812.5 550Z" fill="#5c5b55" stroke="#0a0a0a" stroke-width="0.9" /><path d="M1814 363.7L1821 375M1866 362L1859.5 374M1856 570L1850 557.5M1806.5 560.5L1812.5 550" fill="none" stroke="#0a0a0a" stroke-width="0.6" /><path d="M1872 548q7 22.5 -2.5 45" fill="none" stroke="#4a5f6e" stroke-width="1.200"/><path d="M1873.6 549q7 22.5 -2.5 45" fill="none" stroke="#0a0a0a" stroke-width=".7" stroke-dasharray="5 1.500"/><path d="M1885.5 551q-7 22 -2.5 44" fill="none" stroke="#4a5f6e" stroke-width="1.200"/><path d="M1887.1 552q-7 22 -2.5 44" fill="none" stroke="#0a0a0a" stroke-width=".7" stroke-dasharray="5 1.500"/><path d="M1894 349L1918 348.3L1918 602L1882 594.5Z" fill="#62615b" stroke="#0a0a0a" stroke-width="1" /><path d="M1902 361L1918 360.5L1918 590L1891 583Z" fill="#73736a" stroke="#0a0a0a" stroke-width="0.8" /><path d="M1909 372L1918 371.7L1918 578L1898 572Z" fill="#5c5b55" stroke="#0a0a0a" stroke-width="0.8" /><path d="M1785.5 586L1917.5 611.9" fill="none" stroke="#0a0a0a" stroke-width="2.2" /><path d="M1785.5 586L1917.5 611.9" fill="none" stroke="#8f8f83" stroke-width="0.8" stroke-dasharray="1.500 3"/><path d="M1785 594.5L1918 621.5" fill="none" stroke="#0a0a0a" stroke-width="0.8" /><path d="M1798 604.3L1861.5 616.9L1851 818L1787 788Z" fill="#62615b" stroke="#0a0a0a" stroke-width="1" /><path d="M1804.7 616L1854 627L1845 803L1795.5 780Z" fill="#73736a" stroke="#0a0a0a" stroke-width="0.9" /><path d="M1811 630L1848 638L1839.5 789L1802.5 771Z" fill="#5c5b55" stroke="#0a0a0a" stroke-width="0.9" /><path d="M1804.7 616L1811 630M1854 627L1848 638M1845 803L1839.5 789M1795.5 780L1802.5 771" fill="none" stroke="#0a0a0a" stroke-width="0.6" /><path d="M1868 612q7 21.5 -2.4 43" fill="none" stroke="#4a5f6e" stroke-width="1.200"/><path d="M1869.6 613q7 21.5 -2.4 43" fill="none" stroke="#0a0a0a" stroke-width=".7" stroke-dasharray="5 1.500"/><path d="M1881.5 614q-7 22 -2.4 44" fill="none" stroke="#4a5f6e" stroke-width="1.200"/><path d="M1883.1 615q-7 22 -2.4 44" fill="none" stroke="#0a0a0a" stroke-width=".7" stroke-dasharray="5 1.500"/><path d="M1890.8 622L1918 627.5L1918 852L1879 834Z" fill="#62615b" stroke="#0a0a0a" stroke-width="1" /><path d="M1898 634L1918 638L1918 838L1887.5 823Z" fill="#73736a" stroke="#0a0a0a" stroke-width="0.8" /><path d="M1905 646L1918 648.5L1918 825L1894.5 813Z" fill="#5c5b55" stroke="#0a0a0a" stroke-width="0.8" /><path d="M1812.5 207L1790.5 800M1877.5 345L1855 830M1893 336L1869 838" fill="none" stroke="#0a0a0a" stroke-width="1.3" stroke-dasharray="16 2"/><path d="M1798.4 207L1778.8 540L1764.5 795" fill="none" stroke="#0a0a0a" stroke-width="1.2" /></g><rect x="270.500" y="82.500" width="1648" height="905" fill="none" stroke="#8a8a92" stroke-width="1"/></svg>
<div style="left:1060px;top:83px;width:71px;height:23px;background:#8fc6ef;border-radius:0 0 9px 9px;box-shadow:0 1px 0 #6aa6d4;"></div>
<span class="d" style="left:1075px;top:88px;letter-spacing:-0.11px;">View 2 *</span>
<div style="left:1894px;top:83px;width:25px;height:23px;background:#8fc6ef;border-radius:0 0 0 10px;"></div>
<svg style="left:1897px;top:92px" width="20" height="9" viewBox="0 0 20 9"><path d="M0 0h20l-10 9z" fill="#111"/></svg>
<div class="pill" style="left:274px;top:114px;width:25px;height:112px;border-radius:12.500px;"></div>
<svg style="left:275px;top:114px" width="24" height="112" viewBox="0 0 24 112"><path d="M9 5l9 7M12 4l7 5" stroke="#555" stroke-width=".8"/><path d="M12 31v1.500M12 35v1.500M12 39v8" stroke="#111" stroke-width="1.600"/><path d="M8 46h8l-4 6z" fill="#111"/><circle cx="11" cy="62" r="3.500" fill="#fff" stroke="#111" stroke-width="1.600"/><path d="M13.500 64.500l4 4" stroke="#111" stroke-width="2.200"/><path d="M8 83l10 8-10 8z" fill="#111"/></svg>
<div class="pill" style="left:1715px;top:114px;width:184px;height:26px;"></div>
<svg style="left:1727px;top:123px" width="17" height="8" viewBox="0 0 17 8"><path d="M0 0h17l-8.500 8z" fill="#111"/></svg>
<svg style="left:1880px;top:115px" width="16" height="12" viewBox="0 0 16 12"><path d="M2 1l12 9M6 1l9 6" stroke="#777" stroke-width=".8"/></svg>
<span class="d" style="left:1748px;top:121px;letter-spacing:-0.24px;">Törlés kiválasztással</span>
<div class="pill" style="left:1725px;top:145px;width:164px;height:26px;"></div>
<div style="left:1733px;top:148px;width:22px;height:19px;border:1px solid #b0b8bc;border-radius:2px;background:linear-gradient(#f6f6f6,#dcdcdc);"></div>
<svg style="left:1740px;top:152px" width="9" height="11" viewBox="0 0 9 11"><path d="M0 0l9 5.500-9 5.500z" fill="#3a9a22" stroke="#1f6a10" stroke-width=".6"/></svg>
<span class="d" style="left:1761.5px;top:152px;letter-spacing:-0.12px;">Következő referenciapont</span>
<div class="pill" style="left:1725px;top:175px;width:164px;height:26px;"></div>
<div style="left:1732px;top:178px;width:23px;height:20px;border:1.500px solid #111;background:linear-gradient(#f6f6f6,#dcdcdc);"></div>
<svg style="left:1738px;top:180px" width="12" height="16" viewBox="0 0 12 16"><path d="M1 1v12l3-2.500 2.500 5 2-1-2.500-4.500h4z" fill="#222" stroke="#000" stroke-width=".7"/></svg>
<span class="d" style="left:1761.5px;top:183px;letter-spacing:-0.37px;">Bezárás</span>
<div class="pill" style="left:275px;top:843px;width:24px;height:108px;border-radius:12px;"></div>
<svg style="left:275px;top:843px" width="24" height="108" viewBox="0 0 24 108"><path d="M8 8h9M8 11.500h9M8 15h9" stroke="#333" stroke-width="1"/><path d="M5 8h1.500M5 11.500h1.500M5 15h1.500" stroke="#333" stroke-width="1.200"/><path d="M15 31l-9 8.500 9 8.500z" fill="#111"/><path d="M8 71h8M12 67v8" stroke="#111" stroke-width="1.500"/><path d="M8 99h8" stroke="#111" stroke-width="1.800"/></svg>
<div style="left:305px;top:843px;width:114px;height:112px;background:#8fc6ef;border-radius:5px;box-shadow:1px 1px 2px rgba(0,0,0,.5);"></div>
<div style="left:308px;top:847px;width:107px;height:84px;background:#fef8ec;border:1px solid #3b3b3b;"></div>
<svg style="left:309px;top:848px" width="50" height="40" viewBox="0 0 50 40"><path d="M2 34l40-33M2 24l30-23M2 14l18-13" stroke="#555" stroke-width=".6" stroke-dasharray="1 4"/></svg>
<span class="d" style="left:309px;top:938px;letter-spacing:-0.24px;">classicKitchenSample</span>
<div style="left:423px;top:843px;width:114px;height:112px;background:#dde8ee;border:1px solid #a7d3ea;border-radius:5px;box-shadow:1px 1px 2px rgba(0,0,0,.5);"></div>
<svg style="left:427px;top:847px" width="107" height="84" viewBox="0 0 107 84"><defs><pattern id="spk" width="7" height="9" patternUnits="userSpaceOnUse"><path d="M1 1v4M4.500 3v5M6 0v2" stroke="#111" stroke-width=".9"/></pattern><pattern id="spk2" width="5" height="4" patternUnits="userSpaceOnUse"><rect x="1" y="1" width="1.200" height="1.200" fill="#0c0c0c"/></pattern></defs><rect width="107" height="84" fill="#4a4a46"/><rect width="107" height="16" fill="#383836"/><path d="M0 26h107v26h-107z" fill="#75756f"/><path d="M0 60l107-8v32h-107z" fill="#3a3a36"/><path d="M0 60l107-8v32h-107z" fill="url(#spk2)"/><path d="M1 6h19v60h-19z" fill="#a9a99a"/><rect x="6" y="12" width="9" height="24" fill="#8d9a97"/><path d="M1 6h19v60h-19z" fill="url(#spk)"/><path d="M18 36h42v30c-14 7-30 6-42 0z" fill="#b4b4a4"/><path d="M18 36h42v30c-14 7-30 6-42 0z" fill="url(#spk)"/><path d="M18 34h44v3h-44z" fill="#2e2e2c"/><rect x="47" y="37" width="11" height="22" fill="#2a2a28"/><path d="M49 41h7M49 46h7M49 52h7" stroke="#777" stroke-width=".8"/><path d="M60 42h47v22l-47 4z" fill="#b0b0a0"/><path d="M60 42h47v22l-47 4z" fill="url(#spk)"/><path d="M60 40h47v3h-47z" fill="#2e2e2c"/><path d="M20 10h40v18h-40z" fill="#5a5a55"/><path d="M62 22h45v8h-45z" fill="#8a8a80"/><path d="M62 22h45v8h-45z" fill="url(#spk)"/><rect x=".5" y=".5" width="106" height="83" fill="none" stroke="#222"/></svg>
<span class="d" style="left:457px;top:938px;letter-spacing:-0.09px;">View 2 *</span>
<div class="pill" style="left:275px;top:959px;width:222px;height:25px;border-radius:12.500px;"></div>
<svg style="left:275px;top:959px" width="222" height="25" viewBox="0 0 222 25"><path d="M17 3l7 18-7-5-7 5z" fill="#888" stroke="#111" stroke-width="1"/><circle cx="37.500" cy="17" r="3" fill="none" stroke="#2a7a8a" stroke-width="1.100"/><path d="M37.500 11v12M31.500 17h12" stroke="#2a7a8a" stroke-width="1.100" fill="none"/><path d="M42 13l8-8M42 13v-3.500M42 13h3.500M50 5v3.500M50 5h-3.500" stroke="#111" stroke-width="1" fill="none"/><path d="M51 3h4M53 1v4" stroke="#111" stroke-width=".9"/><path d="M61 4v17h16M61 4l-2.500 4M61 4l2.500 4M77 21l-4-2.500M77 21l-4 2.500" stroke="#111" stroke-width="1.200" fill="none"/><rect x="59.500" y="19.500" width="3" height="3" fill="#111"/><text x="66" y="15" font-family="Liberation Sans,sans-serif" font-weight="bold" font-size="11" fill="#111">R</text><path d="M205 1l14 12M210 1l10 8" stroke="#777" stroke-width=".7"/></svg>
<span class="d" style="left:361.5px;top:965px;letter-spacing:-0.34px;">(x) 568&nbsp;&nbsp; (y) 789.7 mm</span>
<div class="pill" style="left:741px;top:959px;width:110px;height:25px;border-radius:12.500px;"></div>
<svg style="left:830px;top:960px" width="20" height="14" viewBox="0 0 20 14"><path d="M4 1l14 12M9 1l10 8" stroke="#777" stroke-width=".7"/></svg>
<span class="d" style="left:748.5px;top:965px;letter-spacing:0.06px;">ENTER&nbsp;&nbsp;&nbsp; ESC</span>
<div style="left:1710px;top:893px;width:57px;height:86px;border:1.500px solid #a7d3ea;border-radius:11px;background:linear-gradient(#eef3f6,#dde6ea);box-shadow:1px 2px 3px rgba(0,0,0,.5);"></div><svg style="left:1710px;top:893px" width="57" height="86" viewBox="0 0 57 86"><path d="M28.500 2v82M2 28.500h53M2 57.500h53" stroke="#c3cdd2" stroke-width="1"/><path d="M8 9l10-6 9 9M11 8v8M23 9v7M14 10h5v4h-5z" stroke="#333" stroke-width=".9" fill="none"/><path d="M4 14h5v5h-5zM4 23c4 1 8 0 12-2" stroke="#333" stroke-width=".8" fill="none"/><path d="M12 19c4-4 10-4 15 0-5 4-11 4-15 0z" fill="#fff" stroke="#222" stroke-width=".9"/><circle cx="19.500" cy="19" r="2.300" fill="#222"/><circle cx="43" cy="6.500" r="2.600" fill="#111"/><path d="M43 10l-1 8-3.500 7M42 18l4 3 1 4.500M42.500 11l-4 3.500v3M43 11.500l4 3 2.500.5" stroke="#111" stroke-width="2.300" fill="none" stroke-linecap="round" stroke-linejoin="round"/><path d="M7 38l12-3.500 7 3v14l-7 4-12-2z" fill="#f8a416" stroke="#333" stroke-width=".9"/><path d="M7 38l12 1.500 7-2M19 39.500v16" stroke="#333" stroke-width=".9" fill="none"/><path d="M19 39.500l7-2v14l-7 4z" fill="#a9a9a9"/><path d="M7 38l12-3.500 7 3-7 2z" fill="#f2f2f2" stroke="#333" stroke-width=".7"/><path d="M8 39l10 1.500v13l-10-1.500z" fill="#fbc04a"/><path d="M36 38l9-3 5 2.500v11l-5 3.500-9-2zM36 38l9 1.500 5-2M45 39.500v12.500" fill="#f6f6f6" stroke="#333" stroke-width="1"/><defs><radialGradient id="sph" cx="45%" cy="30%" r="70%"><stop offset="0" stop-color="#ffd27a"/><stop offset=".5" stop-color="#fb9a1a"/><stop offset="1" stop-color="#f07c00"/></radialGradient></defs><circle cx="15.500" cy="72" r="9.500" fill="url(#sph)"/><path d="M32 72c6-7 15-7 21 0-6 6-15 6-21 0z" fill="#fff" stroke="#222" stroke-width="1.100"/><circle cx="42.500" cy="71.500" r="3.800" fill="#222"/><circle cx="41.500" cy="70.500" r="1" fill="#fff"/><path d="M31 69c6-6 16-7 23 0" stroke="#222" stroke-width="1" fill="none"/></svg><svg style="left:1780px;top:889px;filter:drop-shadow(1px 2px 2px rgba(0,0,0,.5))" width="134" height="94" viewBox="1780 889 134 94"><defs><linearGradient id="ng" x1="0" y1="0" x2="0" y2="1"><stop offset="0" stop-color="#eef3f6"/><stop offset="1" stop-color="#dde6ea"/></linearGradient></defs><path d="M1822 893.500h76a11 11 0 0 1 11 11v62a11 11 0 0 1-11 11h-103a10.500 10.500 0 0 1-10.500-10.500v-7a10.500 10.500 0 0 1 10.500-10.500h5a10.500 10.500 0 0 0 10.500-10.500v-34.500a11 11 0 0 1 11-11z" fill="url(#ng)" stroke="#a7d3ea" stroke-width="1.500"/><path d="M1838.500 895v80M1866.500 895v80M1895.500 897c2 20 2 60 0 78M1811 921.500h84M1811 949.500h84M1895.500 935.500h13" stroke="#c3cdd2" fill="none"/><circle cx="1824" cy="905.500" r="5.300" fill="#fff" stroke="#111" stroke-width="2"/><path d="M1828 910l5.500 5.500" stroke="#111" stroke-width="3" stroke-linecap="round"/><path d="M1821 905.500h6M1824 902.500v6" stroke="#111" stroke-width="1.500"/><path d="M1843.500 911l9-8.500 9 8.500z" fill="#111"/><rect x="1876.500" y="903.500" width="9" height="9" fill="#fff" stroke="#111" stroke-width="1.500"/><path d="M1873 904v-3.500h3.500M1889 904v-3.500h-3.500M1873 912v3.500h3.500M1889 912v3.500h-3.500" stroke="#111" stroke-width="1.800" fill="none"/><path d="M1897 897l10 8M1901 896l7 5" stroke="#666" stroke-width=".7"/><path d="M1830 927.500l-8 8 8 8z" fill="#111"/><path d="M1876 927.500l8 8-8 8z" fill="#111"/><ellipse cx="1852.500" cy="936" rx="10.500" ry="4.500" fill="none" stroke="#111" stroke-width="1.300"/><ellipse cx="1852.500" cy="936" rx="4.500" ry="10.500" fill="none" stroke="#111" stroke-width="1.300"/><path d="M1852.500 926v20M1842 936h21" stroke="#111" stroke-width="1"/><rect x="1791.500" y="958.500" width="13" height="10" fill="#f4f4f4" stroke="#555"/><rect x="1792" y="959" width="5" height="9" fill="#f8a416"/><path d="M1797 962h7.500M1797 965h7.500M1800.500 959v9.500" stroke="#777" stroke-width=".8"/><circle cx="1824" cy="962.500" r="5.300" fill="#fff" stroke="#111" stroke-width="2"/><path d="M1828 967l5.500 5.500" stroke="#111" stroke-width="3" stroke-linecap="round"/><path d="M1821 962.500h6" stroke="#111" stroke-width="1.500"/><path d="M1844.500 960l9 8.500 9-8.500z" fill="#111"/><rect x="1873.500" y="956.500" width="14" height="14" fill="none" stroke="#111" stroke-width="1.200" stroke-dasharray="3 1.500"/><circle cx="1879.500" cy="962.500" r="3.300" fill="#fff" stroke="#111" stroke-width="1.300"/><path d="M1882 965l3.500 3.500" stroke="#111" stroke-width="2"/><path d="M1902 970v-4.500l-4.500 4.500z" fill="#333"/></svg>
<div style="left:0px;top:82px;width:265px;height:876px;background:#dddcea;overflow:hidden;"><div style="left:0px;top:0px;width:265px;height:18px;background:linear-gradient(#eeeef7 0%,#dcdbeb 45%,#bcbbd3 100%);border-bottom:1px solid #a3a2bf;"></div><span class="h" style="left:2px;top:2px;color:#585868;letter-spacing:-0.82px;">Oldalmenü</span><svg style="left:234px;top:2px" width="28" height="14" viewBox="0 0 28 14"><path d="M4.500 2.500h4v5h-4zM7.500 2.500v5M3 7.500h7M6.500 7.500v4" stroke="#000" fill="none" stroke-width="1.100"/><path d="M18 3.500l7 7M25 3.500l-7 7" stroke="#000" stroke-width="1.100"/></svg><div style="left:0px;top:19px;width:248px;height:857px;overflow:hidden;background:#dddcea;"><div style="left:2px;top:0px;width:245px;height:17px;background:linear-gradient(#fafafd,#efeff7);border-bottom:1px solid #d0cfe0;"></div><span class="h" style="left:5px;top:1px;letter-spacing:-0.41px;">Start</span><svg style="left:4px;top:20px" width="24" height="24" viewBox="0 0 24 24"><path d="M2.500 9.500h8v-7h8v17h-16z" fill="#a9cbf5" stroke="#111" stroke-width="1.400"/></svg><span class="m" style="left:32px;top:25px;letter-spacing:-0.48px;">Helyiség formák</span><svg style="left:4px;top:47px" width="24" height="24" viewBox="0 0 24 24"><path d="M1 4h17l3-2v16l-3 3h-17z" fill="#e8742a"/><path d="M18 4l3-2v16l-3 3z" fill="#2b4f9c"/><path d="M1 8h17M1 12.500h17M1 17h17M6 4v4M13 4v4M9.500 8v4.500M3 8v4.500M15.500 8v4.500M6 12.500v4.500M13 12.500v4.500M9.500 17v4M3.500 17v4M15.500 17v4" stroke="#fbe3cf" stroke-width="1.300"/></svg><span class="m" style="left:32px;top:52px;letter-spacing:-1.06px;">Falszerkesztés</span><svg style="left:236px;top:55px" width="6" height="9" viewBox="0 0 6 9"><path d="M.5 0l5 4.500-5 4.500z" fill="#000"/></svg><svg style="left:4px;top:74px" width="24" height="24" viewBox="0 0 24 24"><rect x="2.500" y="3.500" width="17" height="15" fill="#a9cbf5" stroke="#111" stroke-width="1.400"/><path d="M11 11.500h7M14.500 8v7" stroke="#111" stroke-width="1.200"/></svg><span class="m" style="left:32px;top:79px;letter-spacing:-0.67px;">Helyiségvarázsló (Room Maker)</span><svg style="left:4px;top:101px" width="24" height="24" viewBox="0 0 24 24"><path d="M4 10l5-6 8 3 2 12h-15z" fill="#f5d21c" stroke="#b79300" stroke-width=".6"/><path d="M5 3l9 1 4 7-10-1z" fill="#27427e"/><path d="M7.500 3.500l1 2.500 2.500 1-2.500 1-1 2.500-1-2.500-2.500-1 2.500-1z" fill="#fff"/></svg><span class="m" style="left:32px;top:106px;letter-spacing:-0.95px;">DWG rajz beolvasása</span><svg style="left:236px;top:109px" width="6" height="9" viewBox="0 0 6 9"><path d="M.5 0l5 4.500-5 4.500z" fill="#000"/></svg><svg style="left:4px;top:128px" width="24" height="24" viewBox="0 0 24 24"><rect x="1.500" y="2.500" width="16" height="16" fill="#eef3fa" stroke="#7b8aa6"/><path d="M2 17l5-7 3 3 3-6 4 2v8z" fill="#c9d9ee"/><path d="M2 17l5-7 3 3" stroke="#234" fill="none"/><circle cx="13" cy="5.500" r="2.600" fill="#e8452c"/><circle cx="13" cy="5.500" r="1.100" fill="#ffe9a0"/><path d="M9 12h5l1.500 1.500h6.500v8h-13z" fill="#f6c861" stroke="#b98a1e" stroke-width=".8"/><path d="M9 21.500l2-6h11l-2 6z" fill="#fbe09a" stroke="#b98a1e" stroke-width=".8"/></svg><span class="m" style="left:32px;top:133px;letter-spacing:-0.60px;">Háttérkép beállítása</span><svg style="left:236px;top:136px" width="6" height="9" viewBox="0 0 6 9"><path d="M.5 0l5 4.500-5 4.500z" fill="#000"/></svg><div style="left:2px;top:156px;width:245px;height:17px;background:linear-gradient(#fafafd,#efeff7);border-bottom:1px solid #d0cfe0;"></div><span class="h" style="left:5px;top:157px;letter-spacing:-0.75px;">Hangulat montázs</span><svg style="left:4px;top:175px" width="24" height="24" viewBox="0 0 24 24"><rect x="4.500" y="1.500" width="16" height="15" fill="#f3f3f3" stroke="#666"/><rect x="6" y="3" width="5" height="4" fill="#f7c34a"/><rect x="12" y="3" width="7" height="3" fill="#62aef0"/><rect x="6" y="8.500" width="8" height="5" fill="#f08a5a"/><rect x="15.500" y="7" width="3" height="8" fill="#9a9a9a"/><circle cx="6" cy="17.500" r="4.800" fill="#3fb52f" stroke="#e8ffe4" stroke-width=".8"/><path d="M3.500 17.500h5M6 15v5" stroke="#fff" stroke-width="1.700"/></svg><span class="m" style="left:32px;top:180px;letter-spacing:-0.58px;">Hangulat montázs létrehozás</span><svg style="left:4px;top:202px" width="24" height="24" viewBox="0 0 24 24"><rect x="1.500" y="2.500" width="16" height="16" fill="#eef3fa" stroke="#7b8aa6"/><path d="M2 17l5-7 3 3 3-6 4 2v8z" fill="#c9d9ee"/><path d="M2 17l5-7 3 3" stroke="#234" fill="none"/><circle cx="13" cy="5.500" r="2.600" fill="#e8452c"/><circle cx="13" cy="5.500" r="1.100" fill="#ffe9a0"/><path d="M9 12h5l1.500 1.500h6.500v8h-13z" fill="#f6c861" stroke="#b98a1e" stroke-width=".8"/><path d="M9 21.500l2-6h11l-2 6z" fill="#fbe09a" stroke="#b98a1e" stroke-width=".8"/></svg><span class="m" style="left:32px;top:207px;letter-spacing:-0.92px;">Kép beolvasása</span><svg style="left:4px;top:229px" width="24" height="24" viewBox="0 0 24 24"><rect x="12" y="3" width="7" height="7" fill="#f09030"/><path d="M14 4v5M16 4v5" stroke="#fbe" stroke-width=".8"/><rect x="4" y="12" width="7" height="7" fill="#8aa0f0"/><path d="M4 12l7 7M4 15l4 4M7 12l4 4" stroke="#dfe6ff" stroke-width=".7"/><path d="M6 11v-4h6v-2.500l4 4-4 4v-2.500h-3v1z" fill="#1f2fd0"/></svg><span class="m" style="left:32px;top:234px;letter-spacing:-0.64px;">Anyag helyettesítése</span><svg style="left:4px;top:256px" width="24" height="24" viewBox="0 0 24 24"><rect x="4.500" y="6.500" width="13" height="12" fill="#eef3fa" stroke="#555" stroke-dasharray="1.500 1.500"/><rect x="5" y="11" width="8" height="7" fill="#dfe8f4" stroke="#789"/><path d="M5.500 17.500l3-4 2 2 2-3v5z" fill="#b8c8dd"/><circle cx="11" cy="11" r="1.300" fill="#e8452c"/><path d="M11 11l7-7M18 4h-4M18 4v4" stroke="#1f2fd0" stroke-width="1.700" fill="none"/></svg><span class="m" style="left:32px;top:261px;letter-spacing:-0.84px;">Kép átméretezése</span><svg style="left:4px;top:283px" width="24" height="24" viewBox="0 0 24 24"><rect x="3.500" y="8.500" width="12" height="11" fill="#eef3fa" stroke="#789"/><path d="M4 19l4-6 3 3 2-3 2 2v4z" fill="#b8c8dd"/><path d="M3 8.500h14M15.500 8v12" stroke="#e0202a" stroke-width="1.200" stroke-dasharray="1.500 1.200"/><path d="M13 2l4 6M18 3l-5 4" stroke="#222" stroke-width="1.100"/><circle cx="18.500" cy="7.500" r="1.500" fill="none" stroke="#222"/><circle cx="19" cy="3.500" r="1.400" fill="none" stroke="#222"/></svg><span class="m" style="left:32px;top:288px;letter-spacing:-0.92px;">Kép levágása</span><svg style="left:4px;top:310px" width="24" height="24" viewBox="0 0 24 24"><path d="M10 5v14h-6z" fill="#d4d4dc"/><path d="M13 5v14h6z" fill="#2a55e8" stroke="#1230b0" stroke-width=".8"/><path d="M14.500 11v6.500h3z" fill="#e8ecff"/></svg><span class="m" style="left:32px;top:315px;letter-spacing:-0.79px;">Vízszintes tükrözés</span><svg style="left:4px;top:337px" width="24" height="24" viewBox="0 0 24 24"><path d="M18 3v8h-12z" fill="#d4d4dc"/><path d="M18 14v7l-12-7z" fill="#2a55e8" stroke="#1230b0" stroke-width=".8"/></svg><span class="m" style="left:32px;top:342px;letter-spacing:-0.67px;">Függőleges tükrözés</span><svg style="left:4px;top:364px" width="24" height="24" viewBox="0 0 24 24"><rect x="3" y="4" width="15" height="14" fill="#444"/><rect x="4.500" y="2.500" width="15" height="14" fill="#f4f6fb" stroke="#778"/><path d="M5 16l5-6 3 3 3-4 3 3v4z" fill="#e4e9f2"/><circle cx="12" cy="6.500" r="1.800" fill="#f6d2c8"/></svg><span class="m" style="left:32px;top:369px;letter-spacing:-0.53px;">Vetett árnyék</span><svg style="left:4px;top:391px" width="24" height="24" viewBox="0 0 24 24"><rect x="2.500" y="2.500" width="9" height="9" fill="#f4dc7a" stroke="#555"/><rect x="10.500" y="10.500" width="9" height="9" fill="#c8c8c8" stroke="#555"/><rect x="6.500" y="6.500" width="9" height="9" fill="#f0c84a" stroke="#7a6420"/></svg><span class="m" style="left:32px;top:396px;letter-spacing:-0.57px;">Megjelenítési sorrend</span><svg style="left:236px;top:399px" width="6" height="9" viewBox="0 0 6 9"><path d="M.5 0l5 4.500-5 4.500z" fill="#000"/></svg><svg style="left:4px;top:418px" width="24" height="24" viewBox="0 0 24 24"><rect x="2.500" y="3.500" width="13" height="15" rx="1.500" fill="#e8c24a" stroke="#7a6420"/><rect x="6" y="1.500" width="6" height="4" rx="1" fill="#bbb" stroke="#555"/><rect x="8.500" y="9.500" width="11" height="11" fill="#3b78d8" stroke="#1d4a9a"/><rect x="10" y="12" width="8" height="7" fill="#f0843a"/><path d="M10 19l3-4 2 2 3-3v5z" fill="#f7c090"/></svg><span class="m" style="left:32px;top:423px;letter-spacing:-0.60px;">Hangulat montázs vágólapra másolása</span><svg style="left:4px;top:445px" width="24" height="24" viewBox="0 0 24 24"><rect x="1.500" y="1.500" width="21" height="21" rx="2.500" fill="#f5f5f5" stroke="#222" stroke-width="1.800"/><path d="M5 6l7-2 6 2v9l-6 3-7-3z" fill="#e8821e"/><path d="M5 6l7 2v10l-7-3z" fill="#f7b155"/><path d="M12 8l6-2v9l-6 3z" fill="#c25e0c"/><path d="M8 14h9M13 10l4 4-4 4" stroke="#222" stroke-width="2.200" fill="none"/><rect x="14" y="16" width="7" height="5" fill="#ddd" transform="rotate(-15 17 18)"/></svg><span class="m" style="left:32px;top:450px;letter-spacing:-0.79px;">Közzététel</span><div style="left:2px;top:473px;width:245px;height:17px;background:linear-gradient(#fafafd,#efeff7);border-bottom:1px solid #d0cfe0;"></div><span class="h" style="left:5px;top:474px;letter-spacing:-0.84px;">Épület</span><svg style="left:4px;top:492px" width="24" height="24" viewBox="0 0 24 24"><rect x="1.500" y="1.500" width="20" height="18" rx="1.500" fill="#fdfdfd" stroke="#3c6ea0"/><rect x="2" y="2" width="19" height="3" fill="#2f67a8"/><path d="M4 8.500h2M8 8.500h11M4 11.500h2M8 11.500h11M4 14.500h2M8 14.500h8M4 17h2M8 17h6" stroke="#333" stroke-width="1.200"/><path d="M15 21v-7.500c0-1 1.500-1 1.500 0v3.500l4 1v4z" fill="#fff" stroke="#111" stroke-width=".9"/><rect x="1" y="19" width="20" height="2" fill="#8fb3d6"/></svg><span class="m" style="left:32px;top:497px;letter-spacing:-0.47px;">Tulajdonságok</span><svg style="left:236px;top:500px" width="6" height="9" viewBox="0 0 6 9"><path d="M.5 0l5 4.500-5 4.500z" fill="#000"/></svg><svg style="left:4px;top:519px" width="24" height="24" viewBox="0 0 24 24"><path d="M3 19l15-15 3 2.500-15 15z" fill="#c8dcfa" stroke="#1f2fd0" stroke-width="1.200"/><path d="M3 20l13-13" stroke="#1f2fd0" stroke-width="1.400"/><path d="M16.500 7h-5M16.500 7v5" stroke="#1f2fd0" stroke-width="1.400" fill="none"/><rect x="1.500" y="17.500" width="3" height="3" fill="#f0641e"/><rect x="16.500" y="2.500" width="3" height="3" fill="#1f2fd0"/></svg><span class="m" style="left:32px;top:524px;letter-spacing:-1.09px;">Fal</span><svg style="left:4px;top:546px" width="24" height="24" viewBox="0 0 24 24"><path d="M8 5h4a6.500 6.500 0 0 1 0 13h-3" fill="none" stroke="#2a55e8" stroke-width="1.600"/><path d="M8 5h4a6.500 6.500 0 0 1 5 3" fill="none" stroke="#f0641e" stroke-width="1.600"/><rect x="6" y="3.500" width="3" height="3" fill="#f0641e"/><rect x="7" y="16.500" width="3" height="3" fill="#1f2fd0"/></svg><span class="m" style="left:32px;top:551px;letter-spacing:-0.69px;">Íves fal</span><svg style="left:4px;top:573px" width="24" height="24" viewBox="0 0 24 24"><path d="M2.500 11.500h16v5h-16z" fill="none" stroke="#888" stroke-width="1.100"/><path d="M7 11.500v-8.500l10 8.500" fill="none" stroke="#222" stroke-width="1.200"/><path d="M7 11.500h10v5h-10z" fill="#eee" stroke="#222" stroke-width="1"/><path d="M17 13l1.800 3.800 4.200.4-3.200 2.800 1 4-3.800-2.200-3.800 2.200 1-4-3.200-2.800 4.200-.4z" fill="#f7b716" stroke="#d18f00" stroke-width=".5"/></svg><span class="m" style="left:32px;top:578px;letter-spacing:-0.13px;">Ajtó</span><svg style="left:4px;top:600px" width="24" height="24" viewBox="0 0 24 24"><rect x="1" y="3" width="5" height="13" fill="#f0a060"/><rect x="16" y="3" width="5" height="13" fill="#f0a060"/><path d="M3 4v11M19 4v11" stroke="#111" stroke-width="1.600"/><path d="M3 7.500h16M3 11.500h16M6.500 6v7M15.500 6v7" stroke="#111" stroke-width="1.200"/><path d="M17 13l1.800 3.800 4.200.4-3.200 2.800 1 4-3.800-2.200-3.800 2.200 1-4-3.200-2.800 4.200-.4z" fill="#f7b716" stroke="#d18f00" stroke-width=".5"/></svg><span class="m" style="left:32px;top:605px;letter-spacing:-0.47px;">Ablak</span><svg style="left:4px;top:627px" width="24" height="24" viewBox="0 0 24 24"><path d="M0 3h22v7l-9 11h-13z" fill="#f0a060"/><path d="M3.500 8.500h9v9h-9z" fill="#a9d4f5" stroke="#111" stroke-width="1.300"/><path d="M12.500 8.500l5.500-5v9l-5.500 5z" fill="#a9d4f5" stroke="#111" stroke-width="1.300"/><path d="M0 21h13l9-11" fill="none" stroke="#111" stroke-width="1.200"/></svg><span class="m" style="left:32px;top:632px;letter-spacing:-0.92px;">Sarokablak szerkesztés</span><svg style="left:4px;top:654px" width="24" height="24" viewBox="0 0 24 24"><path d="M8.500 3.500l3-2h3v16l-3 2h-3z" fill="#c8dcfa" stroke="#1f2fd0" stroke-width="1.400"/><path d="M11.500 1.500v18" stroke="#1f2fd0" stroke-width="1"/><rect x="11" y="17.500" width="3" height="3" fill="#f0641e"/></svg><span class="m" style="left:32px;top:659px;letter-spacing:-0.79px;">Oszlop</span><svg style="left:4px;top:681px" width="24" height="24" viewBox="0 0 24 24"><path d="M2 13l3-4h17l-3 4z" fill="#c8dcfa" stroke="#1f2fd0" stroke-width="1.200"/><path d="M2 13h17v2.500h-17z" fill="#7f9af0" stroke="#1f2fd0"/><path d="M4 7.500h18" stroke="#1f2fd0" stroke-width="1.300" stroke-dasharray="1.500 1.500"/><rect x="18.500" y="13" width="3" height="3" fill="#f0641e"/><circle cx="21" cy="10" r="1.300" fill="#f0641e"/></svg><span class="m" style="left:32px;top:686px;letter-spacing:-1.01px;">Gerenda</span><svg style="left:4px;top:708px" width="24" height="24" viewBox="0 0 24 24"><path d="M2.500 2.500h18v17h-11v-9h-7z" fill="#fba919" stroke="#1f2fd0" stroke-width="1.400"/><g fill="#f0641e"><rect x="1" y="1" width="3" height="3"/><rect x="19" y="1" width="3" height="3"/><rect x="19" y="18" width="3" height="3"/><rect x="8" y="18" width="3" height="3"/><rect x="8" y="9" width="3" height="3"/><rect x="1" y="9" width="3" height="3"/></g></svg><span class="m" style="left:32px;top:713px;letter-spacing:-0.79px;">Födém</span><svg style="left:236px;top:716px" width="6" height="9" viewBox="0 0 6 9"><path d="M.5 0l5 4.500-5 4.500z" fill="#000"/></svg><svg style="left:4px;top:735px" width="24" height="24" viewBox="0 0 24 24"><path d="M2.500 2.500h18v17h-11v-9h-7z" fill="#fba919" stroke="#1f2fd0" stroke-width="1.400"/><g fill="#f0641e"><rect x="1" y="1" width="3" height="3"/><rect x="19" y="1" width="3" height="3"/><rect x="19" y="18" width="3" height="3"/><rect x="8" y="18" width="3" height="3"/><rect x="8" y="9" width="3" height="3"/><rect x="1" y="9" width="3" height="3"/></g></svg><span class="m" style="left:32px;top:740px;letter-spacing:-0.65px;">Mennyezet</span><svg style="left:236px;top:743px" width="6" height="9" viewBox="0 0 6 9"><path d="M.5 0l5 4.500-5 4.500z" fill="#000"/></svg><svg style="left:4px;top:762px" width="24" height="24" viewBox="0 0 24 24"><path d="M2 13l11-6 9 4-10 7z" fill="#fafafa" stroke="#111" stroke-width="1.100"/><path d="M2 13v2.500l10 5.500 10-7.500v-2.500l-10 7z" fill="#222"/><path d="M19 3v5M16.500 5.500h5" stroke="#1f2fd0" stroke-width="1.200"/><text x="0" y="23" font-size="7.500" font-weight="bold" fill="#1a1a8c" font-family="Liberation Sans,sans-serif">3P</text></svg><span class="m" style="left:32px;top:767px;letter-spacing:-0.56px;">Tetősík 3 magasságponttal</span><svg style="left:4px;top:789px" width="24" height="24" viewBox="0 0 24 24"><path d="M2.500 2.500h19v8h-12v11h-7z" fill="#e8efff" stroke="#1f2fd0" stroke-width="1.300"/><path d="M9.500 2.500v8M12.500 2.500v8M15.500 2.500v8M18.500 2.500v8M2.500 10.500h7M2.500 13.500h7M2.500 16.500h7M2.500 19h7M2.500 2.500l7 8" stroke="#1f2fd0" stroke-width="1.100"/><g fill="#f0641e"><rect x="1" y="1" width="3" height="3"/><rect x="20" y="1" width="3" height="3"/><rect x="1" y="20" width="3" height="3"/></g></svg><span class="m" style="left:32px;top:794px;letter-spacing:-0.90px;">Lépcső</span><svg style="left:4px;top:816px" width="24" height="24" viewBox="0 0 24 24"><path d="M3 22v-5h5v-5h5v-5h9v15z" fill="#e6e6e6"/><path d="M3 17h5v-5h5v-5h9" fill="none" stroke="#222" stroke-width="1.200"/><path d="M2 10l9-7h11" fill="none" stroke="#1f4fd0" stroke-width="2"/><path d="M5 8.500v8M10 4.500v7M15 3.500v3.500M19 3.500v3.500" stroke="#222" stroke-width="1.200"/></svg><span class="m" style="left:32px;top:821px;letter-spacing:-0.49px;">Korlát</span><svg style="left:236px;top:824px" width="6" height="9" viewBox="0 0 6 9"><path d="M.5 0l5 4.500-5 4.500z" fill="#000"/></svg><svg style="left:4px;top:843px" width="24" height="24" viewBox="0 0 24 24"><path d="M3 16h7v-7h5v-6h7v20h-19z" fill="#fff" stroke="#111" stroke-width="1.300"/><rect x="3" y="17" width="19" height="6" fill="#a9cbf5"/><text x="15.500" y="12" font-size="9" font-weight="bold" fill="#111" font-family="Liberation Sans,sans-serif">1</text></svg><span class="m" style="left:32px;top:848px;letter-spacing:-0.65px;">Helyiségpecsét</span><svg style="left:236px;top:851px" width="6" height="9" viewBox="0 0 6 9"><path d="M.5 0l5 4.500-5 4.500z" fill="#000"/></svg></div><div style="left:248px;top:19px;width:17px;height:857px;background:#dddcea;"></div><svg style="left:252px;top:24px" width="10" height="6" viewBox="0 0 10 6"><path d="M0 5.500l5-5 5 5z" fill="#3d4e6b"/></svg><svg style="left:252px;top:862px" width="10" height="6" viewBox="0 0 10 6"><path d="M0 .5l5 5 5-5z" fill="#3d4e6b"/></svg><div style="left:249px;top:37px;width:15px;height:285px;border:1px solid #a9a8bd;border-radius:3px;background:linear-gradient(to right,#f3f3f6,#dcdce4 50%,#cfcfd9 55%,#dedee6);"></div><div style="left:252px;top:174px;width:8px;height:8px;background:repeating-linear-gradient(#77768c 0 1px,transparent 1px 2px);"></div></div>
<div style="left:265px;top:82px;width:6px;height:906px;background:linear-gradient(to right,#f6f6fa,#e9e9f0);"></div>
<div style="left:0px;top:958px;width:265px;height:30px;background:#dddcea;"></div>
<div style="left:0px;top:958px;width:262px;height:5px;background:linear-gradient(#f4f4f8,#e4e3ee);border-radius:0 0 3px 3px;box-shadow:0 1px 1px #c4c3d6;"></div>
<div style="left:7px;top:961px;width:80px;height:25px;background:linear-gradient(#f1f1f7,#e9e8f2);border:1px solid #c3c2d6;border-top:none;border-radius:0 0 5px 5px;box-shadow:1px 1px 1px #b9b8cc;"></div>
<span class="m" style="left:17.5px;top:967px;color:#8d8d9d;letter-spacing:-0.60px;">Oldalmenü</span>
<div style="left:87px;top:964px;width:1px;height:21px;background:#c3c2d6;box-shadow:1px 0 0 #f2f2f8;"></div>
<span class="m" style="left:95.5px;top:967px;color:#6a6a7e;letter-spacing:-0.48px;">Objektumkö...</span>
<div style="left:175px;top:964px;width:1px;height:21px;background:#c3c2d6;box-shadow:1px 0 0 #f2f2f8;"></div>
<span class="m" style="left:182.5px;top:967px;color:#6a6a7e;letter-spacing:-0.58px;">Tulajdonság...</span>
<div style="left:260px;top:964px;width:1px;height:21px;background:#c3c2d6;box-shadow:1px 0 0 #f2f2f8;"></div>
<div style="left:0px;top:988px;width:1920px;height:30px;background:linear-gradient(to right,#dedded 0%,#e4e3f0 14%,#f2f2f8 30%,#f4f4f9 100%);"></div>
<div style="left:5px;top:995px;width:2px;height:16px;background:repeating-linear-gradient(#3a3a70 0 2px,transparent 2px 4px);"></div>
<div style="left:21px;top:992px;width:18px;height:18px;background:#c9c8dc;border:1px solid #a09fb8;"></div>
<svg style="left:23px;top:994px" width="14" height="14" viewBox="0 0 14 14"><rect x=".5" y="1.500" width="13" height="11" fill="#fff" stroke="#2c58a8"/><rect x="1" y="2" width="12" height="3" fill="#2c58a8"/><rect x="4" y="6.500" width="4" height="3.500" fill="#e85a2a"/><path d="M2 8h10M2 10.500h10" stroke="#9ab" stroke-width=".6"/></svg>
<div style="left:44px;top:998px;width:140px;height:2px;background:#5b84c8;box-shadow:0 1px 0 #f6f6fb;"></div>
<div style="left:124px;top:995px;width:5px;height:9px;background:#e9eef8;border:1px solid #5b84c8;border-radius:0 0 2px 2px;"></div>
<div style="left:193px;top:993px;width:104px;height:18px;background:#f3f3fa;"></div>
<span class="t" style="left:212.5px;top:996px;color:#6b6b7c;letter-spacing:-0.67px;">augusztus 06</span>
<div style="left:303px;top:992px;width:1px;height:20px;background:#b3b2c6;"></div>
<div style="left:309px;top:992px;width:18px;height:18px;background:#c9c8dc;border:1px solid #a09fb8;"></div>
<svg style="left:311px;top:994px" width="14" height="14" viewBox="0 0 14 14"><circle cx="7" cy="7" r="6" fill="#f4f7ff" stroke="#2c58a8" stroke-width="1.300"/><path d="M7 3.500v3.500h3" stroke="#c33" stroke-width="1.200" fill="none"/></svg>
<div style="left:334px;top:998px;width:140px;height:2px;background:#5b84c8;box-shadow:0 1px 0 #f6f6fb;"></div>
<div style="left:397px;top:995px;width:5px;height:9px;background:#e9eef8;border:1px solid #5b84c8;border-radius:0 0 2px 2px;"></div>
<div style="left:482px;top:993px;width:60px;height:18px;background:#f3f3f9;"></div>
<span class="t" style="left:498.3px;top:996px;color:#6b6b7c;letter-spacing:-0.57px;">11:00</span>
<div style="left:547px;top:992px;width:1px;height:20px;background:#b3b2c6;"></div>
<div style="left:553px;top:993px;width:97px;height:19px;background:#fff;border:1px solid #abadb3;"></div>
<span class="t" style="left:556.7px;top:997px;letter-spacing:-0.68px;">Kikapcsolva</span>
<div style="left:634px;top:994px;width:15px;height:17px;background:linear-gradient(#f2f2f2,#e0e0e0 50%,#d2d2d2 50%,#dcdcdc);border-left:1px solid #c0c0c0;"></div>
<svg style="left:638px;top:1001px" width="7" height="4" viewBox="0 0 7 4"><path d="M0 0h7l-3.500 4z" fill="#6a6a6a"/></svg>
<div class="tb" style="left:654px;top:992px;width:21px;height:20px;"></div>
<div class="tb" style="left:678px;top:992px;width:21px;height:20px;"></div>
<div class="tb" style="left:702px;top:992px;width:21px;height:20px;"></div>
<svg style="left:654px;top:992px" width="70" height="20" viewBox="0 0 70 20"><path d="M5 10l5.500-4 5.500 4-5.500 4zM10.500 6v8M5 10v2M16 10v2M5 14h11" fill="#ddd" stroke="#444" stroke-width=".9"/><circle cx="34.500" cy="10" r="7" fill="#2a6fc4"/><path d="M30 6c2-1 4 0 4 2s-3 2-3 4 2 3 3 3c-3 1-6-2-6-5 0-2 1-3 2-4zM37 5c2 1 4 3 4 5-2 0-3 1-3 3l-2 2c0-3-1-4 0-6z" fill="#3ea23a"/><g stroke="#8a8a8a" stroke-width="1.200"><path d="M58.500 4v12M52.500 10h12M54.500 6l8 8M62.500 6l-8 8"/></g><circle cx="58.500" cy="10" r="3" fill="#bdbdbd"/></svg>
<div style="left:0px;top:1018px;width:1920px;height:33px;background:linear-gradient(#f0f0f4 0%,#e1e2e8 12%,#cdced6 45%,#b4b6c0 80%,#a9abb6 100%);border-top:1px solid #a0a2ac;"></div>
<div style="left:0px;top:1050px;width:1920px;height:3px;background:linear-gradient(#5b5d66,#2b2b2f);"></div>
<div style="left:3px;top:1021px;width:35px;height:30px;border:1px solid #b5b7c0;border-bottom:none;border-radius:3px 3px 0 0;background:linear-gradient(#f3f3f6 0%,#e2e3e8 48%,#c6c8d0 52%,#c0c2cb 100%);"></div>
<div style="left:43px;top:1021px;width:35px;height:30px;border:1px solid #b5b7c0;border-bottom:none;border-radius:3px 3px 0 0;background:linear-gradient(#f3f3f6 0%,#e2e3e8 48%,#c6c8d0 52%,#c0c2cb 100%);"></div>
<div style="left:83px;top:1021px;width:35px;height:30px;border:1px solid #b5b7c0;border-bottom:none;border-radius:3px 3px 0 0;background:linear-gradient(#f3f3f6 0%,#e2e3e8 48%,#c6c8d0 52%,#c0c2cb 100%);"></div>
<div style="left:123px;top:1021px;width:35px;height:30px;border:1px solid #b5b7c0;border-bottom:none;border-radius:3px 3px 0 0;background:linear-gradient(#f3f3f6 0%,#e2e3e8 48%,#c6c8d0 52%,#c0c2cb 100%);"></div>
<div style="left:163px;top:1021px;width:35px;height:30px;border:1px solid #b5b7c0;border-bottom:none;border-radius:3px 3px 0 0;background:linear-gradient(#f3f3f6 0%,#e2e3e8 48%,#c6c8d0 52%,#c0c2cb 100%);"></div>
<div style="left:203px;top:1021px;width:35px;height:30px;border:1px solid #b5b7c0;border-bottom:none;border-radius:3px 3px 0 0;background:linear-gradient(#f3f3f6 0%,#e2e3e8 48%,#c6c8d0 52%,#c0c2cb 100%);"></div>
<svg style="left:6px;top:1022px" width="30" height="30" viewBox="0 0 30 30"><g fill="#5c5c5c"><rect x="12" y="0.500" width="6" height="7" rx="1" transform="rotate(0 15 15)"/><rect x="12" y="0.500" width="6" height="7" rx="1" transform="rotate(45 15 15)"/><rect x="12" y="0.500" width="6" height="7" rx="1" transform="rotate(90 15 15)"/><rect x="12" y="0.500" width="6" height="7" rx="1" transform="rotate(135 15 15)"/><rect x="12" y="0.500" width="6" height="7" rx="1" transform="rotate(180 15 15)"/><rect x="12" y="0.500" width="6" height="7" rx="1" transform="rotate(225 15 15)"/><rect x="12" y="0.500" width="6" height="7" rx="1" transform="rotate(270 15 15)"/><rect x="12" y="0.500" width="6" height="7" rx="1" transform="rotate(315 15 15)"/></g><circle cx="15" cy="15" r="11" fill="#5c5c5c"/><circle cx="15" cy="15" r="7" fill="#9a9a9a" stroke="#444" stroke-width="1.500"/><circle cx="15" cy="15" r="3.500" fill="#cfcfcf" stroke="#555"/></svg>
<svg style="left:10px;top:1043px" width="32" height="10" viewBox="0 0 32 10"><defs><radialGradient id="orb" cx="50%" cy="100%" r="100%"><stop offset="0" stop-color="#7fd0ff"/><stop offset=".6" stop-color="#2d6fb5"/><stop offset="1" stop-color="#17426e"/></radialGradient></defs><circle cx="16" cy="17" r="15.500" fill="url(#orb)" stroke="#dbe9f5" stroke-width="1.200"/><circle cx="13" cy="10" r="2.500" fill="#e2522a"/></svg>
<div style="left:48px;top:1024px;width:26px;height:24px;background-image:radial-gradient(#9a9ca8 1px,transparent 1.300px);background-size:5.200px 5.500px;opacity:.8;"></div>
<svg style="left:86px;top:1023px" width="30" height="28" viewBox="0 0 30 28"><rect x="4.500" y="4.500" width="21" height="20" fill="#fdf8dc" stroke="#222" stroke-width="1.600"/><g fill="#d9d3c3" stroke="#777" stroke-width=".7"><rect x="2" y="2" width="4.500" height="4.500"/><rect x="23.500" y="2" width="4.500" height="4.500"/><rect x="2" y="22" width="4.500" height="4.500"/><rect x="23.500" y="22" width="4.500" height="4.500"/></g></svg>
<svg style="left:125px;top:1022px" width="32" height="30" viewBox="0 0 32 30"><g transform="rotate(-42 16 15)"><path d="M7 4v11a9 9 0 0 0 18 0v-11h-6v11a3 3 0 0 1-6 0v-11z" fill="#d8202a" stroke="#7a0c12" stroke-width=".8"/><rect x="7" y="3" width="6" height="5" fill="#e8e8e8" stroke="#666" stroke-width=".7"/><rect x="19" y="3" width="6" height="5" fill="#e8e8e8" stroke="#666" stroke-width=".7"/></g></svg>
<svg style="left:166px;top:1023px" width="30" height="28" viewBox="0 0 30 28"><path d="M6 3v21h21" fill="none" stroke="#e9a6a6" stroke-width="1.200"/><path d="M6 24l9-16M6 24l16-11" stroke="#b9bac4" stroke-width="1"/></svg>
<svg style="left:206px;top:1022px" width="30" height="30" viewBox="0 0 30 30"><rect x="3.500" y="3.500" width="17" height="19" fill="#fbc81a" stroke="#444" stroke-dasharray="2.500 1.800"/><path d="M15 7v16l4-3.500 3 6.500 3-1.500-3-6 5.500-.5z" fill="#fff" stroke="#222" stroke-width="1.100"/></svg>
<div style="left:244px;top:1022px;width:167px;height:25px;border:1px solid #8e909a;border-radius:3px;background:linear-gradient(#f6f6f8,#e9e9ee 50%,#dadbe2 50%,#d3d4dc);"></div>
<svg style="left:246px;top:1025px" width="18" height="18" viewBox="0 0 18 18"><path d="M1 8l6-6 6 6z" fill="#d8302a"/><path d="M3 5.500l1-1M5 3.500l1-1M7 4l1 1M9 6l1 1" stroke="#fff" stroke-width=".8"/><rect x="2.500" y="8" width="9" height="4" fill="#f6e27a" stroke="#665" stroke-width=".5"/><rect x="2.500" y="12" width="9" height="4" fill="#2c4ad0"/><rect x="5.500" y="12.500" width="3" height="3.500" fill="#3fae3a"/><text x="12.500" y="7" font-size="6.500" font-weight="bold" font-family="Liberation Sans,sans-serif">2</text><text x="12.500" y="15" font-size="6.500" font-weight="bold" font-family="Liberation Sans,sans-serif">1</text></svg>
<span class="t" style="left:266.3px;top:1028px;font-size:12.5px;letter-spacing:-0.44px;">Szint:&nbsp; Földszint</span>
<div style="left:411px;top:1022px;width:27px;height:25px;border:1px solid #8e909a;background:linear-gradient(#fdfdfd,#f0f0f3);"></div>
<svg style="left:420px;top:1032px" width="9" height="5" viewBox="0 0 9 5"><path d="M0 0h9l-4.500 5z" fill="#111"/></svg>
<div style="left:450px;top:1021px;width:36px;height:30px;border:1px solid #b5b7c0;border-bottom:none;border-radius:3px 3px 0 0;background:linear-gradient(#f3f3f6 0%,#e2e3e8 48%,#c6c8d0 52%,#c0c2cb 100%);"></div>
<div style="left:489px;top:1021px;width:36px;height:30px;border:1px solid #b5b7c0;border-bottom:none;border-radius:3px 3px 0 0;background:linear-gradient(#f3f3f6 0%,#e2e3e8 48%,#c6c8d0 52%,#c0c2cb 100%);"></div>
<div style="left:529px;top:1021px;width:36px;height:30px;border:1px solid #b5b7c0;border-bottom:none;border-radius:3px 3px 0 0;background:linear-gradient(#f3f3f6 0%,#e2e3e8 48%,#c6c8d0 52%,#c0c2cb 100%);"></div>
<div style="left:570px;top:1021px;width:36px;height:30px;border:1px solid #b5b7c0;border-bottom:none;border-radius:3px 3px 0 0;background:linear-gradient(#f3f3f6 0%,#e2e3e8 48%,#c6c8d0 52%,#c0c2cb 100%);"></div>
<svg style="left:450px;top:1021px" width="160" height="32" viewBox="0 0 160 32"><path d="M18 4l11 11h-6v12h-10v-12h-6z" fill="#b9bccb" stroke="#a6a9b8"/><path d="M57 28l11-11h-6v-12h-10v12h-6z" fill="#b9bccb" stroke="#a6a9b8"/><g transform="translate(80,0)"><path d="M6 24l12-13 3 3-12 13z" fill="#c98a3a" stroke="#6a4414" stroke-width=".8"/><path d="M12 5l8-2 8 8-4 4-4-4-3 1z" fill="#555" stroke="#222" stroke-width=".8"/><text x="17" y="28" font-size="11" font-family="Liberation Sans,sans-serif" fill="#222">3D</text></g><g transform="translate(121,0)"><path d="M6 24l12-13 3 3-12 13z" fill="#d8d8d8" stroke="#555" stroke-width=".8"/><path d="M12 5l8-2 8 8-4 4-4-4-3 1z" fill="#777" stroke="#333" stroke-width=".8"/><rect x="4.500" y="6.500" width="14" height="12" fill="#fbd34a" fill-opacity=".8" stroke="#555" stroke-dasharray="2 1.500"/><text x="17" y="29" font-size="11" font-family="Liberation Sans,sans-serif" fill="#444">3D</text></g></svg>
<div style="left:609px;top:1021px;width:120px;height:27px;background:#f7f7f9;border:1px solid #c9cad2;"></div>
<div style="left:613px;top:1025px;width:10px;height:19px;background:#000;"></div>
<span class="t" style="left:632px;top:1028px;font-size:12.5px;letter-spacing:-0.64px;">Text01</span>
<div style="left:729px;top:1021px;width:27px;height:27px;border:1px solid #8e909a;background:linear-gradient(#fdfdfd,#f0f0f3);"></div>
<svg style="left:738px;top:1032px" width="9" height="5" viewBox="0 0 9 5"><path d="M0 0h9l-4.500 5z" fill="#111"/></svg>
<div style="left:767px;top:1021px;width:33px;height:30px;border:1px solid #b5b7c0;border-bottom:none;border-radius:3px 3px 0 0;background:linear-gradient(#f3f3f6 0%,#e2e3e8 48%,#c6c8d0 52%,#c0c2cb 100%);"></div>
<div style="left:800px;top:1021px;width:29px;height:30px;border:1px solid #b5b7c0;border-bottom:none;border-radius:3px 3px 0 0;background:linear-gradient(#f3f3f6 0%,#e2e3e8 48%,#c6c8d0 52%,#c0c2cb 100%);"></div>
<svg style="left:811px;top:1033px" width="7" height="4" viewBox="0 0 7 4"><path d="M0 0h7l-3.500 4z" fill="#333"/></svg>
<div style="left:836px;top:1021px;width:33px;height:30px;border:1px solid #b5b7c0;border-bottom:none;border-radius:3px 3px 0 0;background:linear-gradient(#f3f3f6 0%,#e2e3e8 48%,#c6c8d0 52%,#c0c2cb 100%);"></div>
<div style="left:869px;top:1021px;width:29px;height:30px;border:1px solid #b5b7c0;border-bottom:none;border-radius:3px 3px 0 0;background:linear-gradient(#f3f3f6 0%,#e2e3e8 48%,#c6c8d0 52%,#c0c2cb 100%);"></div>
<svg style="left:880px;top:1033px" width="7" height="4" viewBox="0 0 7 4"><path d="M0 0h7l-3.500 4z" fill="#333"/></svg>
<div style="left:904px;top:1021px;width:33px;height:30px;border:1px solid #b5b7c0;border-bottom:none;border-radius:3px 3px 0 0;background:linear-gradient(#f3f3f6 0%,#e2e3e8 48%,#c6c8d0 52%,#c0c2cb 100%);"></div>
<div style="left:937px;top:1021px;width:29px;height:30px;border:1px solid #b5b7c0;border-bottom:none;border-radius:3px 3px 0 0;background:linear-gradient(#f3f3f6 0%,#e2e3e8 48%,#c6c8d0 52%,#c0c2cb 100%);"></div>
<svg style="left:948px;top:1033px" width="7" height="4" viewBox="0 0 7 4"><path d="M0 0h7l-3.500 4z" fill="#333"/></svg>
<div style="left:972px;top:1021px;width:33px;height:30px;border:1px solid #b5b7c0;border-bottom:none;border-radius:3px 3px 0 0;background:linear-gradient(#f3f3f6 0%,#e2e3e8 48%,#c6c8d0 52%,#c0c2cb 100%);"></div>
<div style="left:1005px;top:1021px;width:29px;height:30px;border:1px solid #b5b7c0;border-bottom:none;border-radius:3px 3px 0 0;background:linear-gradient(#f3f3f6 0%,#e2e3e8 48%,#c6c8d0 52%,#c0c2cb 100%);"></div>
<svg style="left:1016px;top:1033px" width="7" height="4" viewBox="0 0 7 4"><path d="M0 0h7l-3.500 4z" fill="#333"/></svg>
<svg style="left:767px;top:1021px" width="240" height="30" viewBox="0 0 240 30"><path d="M5 18l12-6 10 4-12 7z" fill="#2f9a3a"/><path d="M5 18v3l10 5 12-7v-3l-12 7z" fill="#1d6a26"/><path d="M5 12l12-6 10 4-12 7z" fill="#e8323a"/><path d="M5 12v4l10 5 12-7v-4l-12 7z" fill="#b01a22"/><path d="M75 24l18-17" stroke="#2a55e8" stroke-width="1.600"/><rect x="73.500" y="22.500" width="3" height="3" fill="#111"/><rect x="91.500" y="5.500" width="3" height="3" fill="#111"/><path d="M141 15h14v-4l7 5-7 5v-4h-14z" fill="#2a55e8"/><path d="M152 13h-7v-3l-6 5 6 5v-3h7" fill="#f4f4f4" stroke="#333" stroke-width=".9"/><rect x="209.500" y="6.500" width="21" height="18" fill="#d9dae0" stroke="#777" stroke-width="1.400"/><rect x="213.500" y="10.500" width="13" height="10" fill="#c9cad2" stroke="#888"/></svg>
<div style="left:448px;top:178px;width:1024px;height:695px;border-radius:4px 4px 1px 1px;border:1px solid #e2e2e2;box-shadow:0 0 0 1px #262626, 2px 4px 9px 1px rgba(0,0,0,.55);background:linear-gradient(to right,rgba(150,150,148,.0),rgba(150,150,148,0)),linear-gradient(#6e6e6b 0px,#626260 10px,#5a5a58 23px,#646462 24px,#5d5d5a 100%);"></div>
<div style="left:450px;top:180px;width:1020px;height:21px;background:linear-gradient(to right,rgba(255,255,255,.45) 0px,rgba(255,255,255,.35) 60px,rgba(255,255,255,.06) 170px,rgba(255,255,255,0) 400px,rgba(255,255,255,0) 800px,rgba(255,255,255,.12) 900px,rgba(255,255,255,.3) 1020px);border-radius:3px 3px 0 0;"></div>
<div style="left:450px;top:180px;width:1020px;height:10px;background:linear-gradient(rgba(255,255,255,.25),rgba(255,255,255,0));border-radius:3px 3px 0 0;"></div>
<span class="t" style="left:455.3px;top:184px;text-shadow:0 0 5px #fff,0 0 8px #fff,0 0 10px rgba(255,255,255,.8);letter-spacing:0.20px;">Bútorfront</span>
<div style="left:1450px;top:183px;width:16px;height:15px;border:1px solid #4a1a14;border-radius:3px;background:linear-gradient(#e9a99b 0%,#d9705c 45%,#c43c22 50%,#d8553a 100%);box-shadow:0 0 0 1px rgba(255,255,255,.5) inset;"></div>
<svg style="left:1453.500px;top:186.500px" width="9" height="8" viewBox="0 0 9 8"><path d="M1 1l7 6M8 1l-7 6" stroke="#3a1410" stroke-width="3.200"/><path d="M1 1l7 6M8 1l-7 6" stroke="#fff" stroke-width="1.800"/></svg>
<div style="left:449px;top:201px;width:5px;height:667px;background:linear-gradient(#dedede 0px,#bdbdbd 163px,#484846 165px,#484846 289px,#8e8e8c 292px,#808080 667px);"></div>
<div style="left:1467px;top:201px;width:4px;height:667px;background:linear-gradient(#d8d8d8 0px,#b8b8b8 163px,#555553 165px,#555553 337px,#9a9a98 340px,#8c8c8a 667px);"></div>
<div style="left:449px;top:867px;width:1022px;height:5px;background:linear-gradient(#8a8a88,#6c6c6a);"></div>
<div style="left:453px;top:201px;width:1014px;height:667px;background:#f0f0f0;border:1px solid #2a2a2a;box-shadow:0 0 0 1px rgba(255,255,255,.85);"></div>
<div style="left:458px;top:203px;width:1004px;height:404px;background:#fff9ed;border:1px solid #8a8a8a;border-top:2px solid #7e7e7e;border-left:2px solid #8a8a8a;border-right:1px solid #e8e8e8;border-bottom:1px solid #e0e0e0;"></div>
<svg style="left:860px;top:205px" width="200" height="402" viewBox="860 205 200 402"><path d="M870.600 244.300L879.600 246V600.500L870.600 602z" fill="#dcdccd" stroke="#111" stroke-width="1"/><path d="M870.600 244.300L1042 209.200L1050.600 212.400L879.600 246z" fill="#b9baac" stroke="#111" stroke-width=".9"/><path d="M879.600 246L1050.600 212.400V566L879.600 600.500z" fill="#d9dacb" stroke="#111" stroke-width="1"/><path d="M901.200 270.800L1028.600 246V541L901.200 563.500z" fill="#8a928f"/><path d="M1021 249L1028.600 246V541L1021 543.500z" fill="#a8ada6"/><path d="M1021 249V543.500M1024.500 247.500V542.500" stroke="#111" stroke-width=".9"/><path d="M901.200 563.500L1028.600 541L1021 543.500L901.200 567z" fill="#333"/><path d="M901.200 566.500L1028.600 543.500" stroke="#d9dacb" stroke-width="1.500" stroke-dasharray="2 2"/><path d="M901.200 569.500L1028.600 546" stroke="#111" stroke-width="1.200"/><path d="M901.200 270.800L1028.600 246M901.200 250V596M1028.600 217V570.500M901.200 563L1028.600 540.500" stroke="#111" stroke-width="1.100" fill="none"/><path d="M879.600 246V600.500" stroke="#111" stroke-width="2.400"/></svg>
<div style="left:460px;top:643px;width:1000px;height:1px;background:#a0a0a0;"></div>
<div style="left:459px;top:615px;width:28px;height:30px;border:1px solid #3cb0e8;border-bottom:none;border-radius:3px 3px 0 0;background:linear-gradient(#eaf6fd,#d2ecfa 50%,#c0e4f8);box-shadow:0 0 0 1px #e8f6fd inset;"></div>
<div class="tb" style="left:489px;top:616px;width:28px;height:27px;border-radius:2px;"></div>
<div class="tb" style="left:529px;top:616px;width:28px;height:27px;border-radius:2px;"></div>
<div class="tb" style="left:559px;top:616px;width:28px;height:27px;border-radius:2px;"></div>
<div class="tb" style="left:588px;top:616px;width:28px;height:27px;border-radius:2px;"></div>
<div class="tb" style="left:618px;top:616px;width:28px;height:27px;border-radius:2px;"></div>
<div class="tb" style="left:658px;top:616px;width:28px;height:27px;border-radius:2px;"></div>
<div class="tb" style="left:698px;top:616px;width:28px;height:27px;border-radius:2px;"></div>
<div class="tb" style="left:728px;top:616px;width:28px;height:27px;border-radius:2px;"></div>
<div class="tb" style="left:1309px;top:615px;width:25px;height:26px;border-radius:3px;"></div>
<div class="tb" style="left:1341px;top:615px;width:25px;height:26px;border-radius:3px;opacity:.75;"></div>
<div class="tb" style="left:1366px;top:615px;width:25px;height:26px;border-radius:3px;opacity:.75;"></div>
<div class="tb" style="left:1408px;top:615px;width:25px;height:26px;border-radius:3px;"></div>
<div class="tb" style="left:1435px;top:615px;width:25px;height:26px;border-radius:3px;"></div>
<div style="left:490px;top:661px;width:1px;height:164px;background:#a0a0a0;"></div>
<div style="left:461px;top:662px;width:30px;height:29px;border:1px solid #3cb0e8;border-right:none;border-radius:3px 0 0 3px;background:linear-gradient(#eaf6fd,#c8e8fa);box-shadow:0 0 0 1px #e8f6fd inset;"></div>
<div class="tb" style="left:463px;top:696px;width:27px;height:28px;border-radius:2px;"></div>
<div class="tb" style="left:463px;top:729px;width:27px;height:28px;border-radius:2px;"></div>
<div class="tb" style="left:463px;top:761px;width:27px;height:28px;border-radius:2px;"></div>
<span class="d" style="left:504.5px;top:670px;letter-spacing:-0.30px;">Elhelyezkedés</span>
<div style="left:505px;top:686px;width:120px;height:22px;border-radius:3px;border:1px solid #707070;background:linear-gradient(#f2f2f2,#ebebeb 50%,#dddddd 50%,#cfcfcf);"></div>
<span class="d" style="left:508.5px;top:691px;letter-spacing:-0.25px;">Függőleges</span>
<svg style="left:611px;top:695px" width="8" height="4" viewBox="0 0 8 4"><path d="M0 0h8l-4 4z" fill="#000"/></svg>
<div style="left:656px;top:660px;width:648px;height:139px;background:#fff;border-top:1px solid #8a8a8a;border-left:1px solid #8a8a8a;"></div>
<svg style="left:657px;top:661px" width="647" height="125" viewBox="657 661 647 125"><path transform="translate(674.5,666)" d="M0 58V8Q0 6 5 3L10 0H24L29 3Q35 6 35 8V58Z" fill="#fff" stroke="#222" stroke-width="1.100"/><path transform="translate(739.5,666)" d="M0 0H40C34 10 36 20 40 30S44 52 38 58H0Z" fill="#fff" stroke="#222" stroke-width="1.100"/><path transform="translate(809.5,666)" d="M0 0H40C34 10 36 20 40 30S44 52 38 58H0Z" fill="#fff" stroke="#222" stroke-width="1.100"/><path transform="translate(884.5,666)" d="M0 58V11C4 11 7 9 9 6S14 0 17.500 0S24 3 26 6S31 11 35 11V58Z" fill="#fff" stroke="#222" stroke-width="1.100"/><path transform="translate(954.5,666)" d="M0 58V11C4 11 7 9 9 6S14 0 17.500 0S24 3 26 6S31 11 35 11V58Z" fill="#fff" stroke="#222" stroke-width="1.100"/><path transform="translate(1024.5,666)" d="M0 58V7Q0 3 6 1.500Q17.500-1 29 1.500Q35 3 35 7V58Z" fill="#fff" stroke="#222" stroke-width="1.100"/><rect x="1090.5" y="666.500" width="43" height="10" fill="#fff" stroke="#222" stroke-width="1.100"/><rect x="1090.5" y="681.500" width="43" height="43" fill="#fff" stroke="#222" stroke-width="1.100"/><rect x="1160.5" y="666.500" width="43" height="10" fill="#fff" stroke="#222" stroke-width="1.100"/><rect x="1160.5" y="681.500" width="43" height="43" fill="#fff" stroke="#222" stroke-width="1.100"/><rect x="1216.500" y="660.500" width="69" height="101" fill="#dcdcdc" stroke="#555"/><rect x="1221" y="665" width="61" height="60" fill="#f6f6f6"/><rect x="1222.500" y="680.500" width="58" height="30" fill="#f4f4f4" stroke="#222" stroke-width="1.100"/></svg>
<span class="t" style="left:667.2px;top:730px;font-size:12.5px;color:#1e3a2a;letter-spacing:-0.47px;">Elölnézeti</span>
<span class="t" style="left:671.8px;top:746px;font-size:12.5px;color:#1e3a2a;letter-spacing:0.01px;">hajlított</span>
<span class="t" style="left:737.2px;top:730px;font-size:12.5px;color:#1e3a2a;letter-spacing:-0.47px;">Elölnézeti</span>
<span class="t" style="left:738.4px;top:746px;font-size:12.5px;color:#1e3a2a;letter-spacing:-0.34px;">hullámos</span>
<span class="t" style="left:807.2px;top:730px;font-size:12.5px;color:#1e3a2a;letter-spacing:-0.47px;">Elölnézeti</span>
<span class="t" style="left:808.4px;top:746px;font-size:12.5px;color:#1e3a2a;letter-spacing:-0.34px;">hullámos</span>
<span class="t" style="left:877.2px;top:730px;font-size:12.5px;color:#1e3a2a;letter-spacing:-0.47px;">Elölnézeti</span>
<span class="t" style="left:877.2px;top:746px;font-size:12.5px;color:#1e3a2a;letter-spacing:-0.40px;">katedrális</span>
<span class="t" style="left:947.2px;top:730px;font-size:12.5px;color:#1e3a2a;letter-spacing:-0.47px;">Elölnézeti</span>
<span class="t" style="left:947.2px;top:746px;font-size:12.5px;color:#1e3a2a;letter-spacing:-0.40px;">katedrális</span>
<span class="t" style="left:1017.2px;top:730px;font-size:12.5px;color:#1e3a2a;letter-spacing:-0.47px;">Elölnézeti</span>
<span class="t" style="left:1032.2px;top:746px;font-size:12.5px;color:#1e3a2a;letter-spacing:-0.86px;">íves</span>
<span class="t" style="left:1091.4px;top:738px;font-size:12.5px;color:#1e3a2a;letter-spacing:-0.20px;">Modern</span>
<span class="t" style="left:1161.4px;top:738px;font-size:12.5px;color:#1e3a2a;letter-spacing:-0.20px;">Modern</span>
<span class="t" style="left:1230.0px;top:738px;font-size:12.5px;color:#1e3a2a;letter-spacing:-0.48px;">Téglalap</span>
<div style="left:664px;top:787px;width:100px;height:9px;background:#595959;"></div>
<div style="left:657px;top:786px;width:13px;height:12px;border:1px solid #555;border-radius:5px 2px 2px 5px;background:linear-gradient(#fdfdfd,#d0d0d0);"></div>
<div style="left:762px;top:786px;width:535px;height:12px;border:1px solid #2aa0d0;background:linear-gradient(#eef1f3,#dfe2e4 50%,#d0d4d7);"></div>
<div style="left:1295px;top:786px;width:9px;height:12px;border:1px solid #555;border-radius:2px 5px 5px 2px;background:linear-gradient(#fdfdfd,#d0d0d0);"></div>
<span class="d" style="left:600.3px;top:812px;letter-spacing:-0.16px;">Vastagság</span>
<div style="left:657px;top:806px;width:104px;height:21px;background:#fff;border:1px solid #e2e3ea;border-radius:2px;"></div>
<span class="d" style="left:662.2px;top:811px;letter-spacing:-0.76px;">20 mm</span>
<svg style="left:748px;top:815px" width="8" height="4" viewBox="0 0 8 4"><path d="M0 0h8l-4 4z" fill="#000"/></svg>
<span class="d" style="left:463.3px;top:841px;letter-spacing:-0.13px;">Elölnézeti profil</span>
<div class="tb" style="left:1310px;top:662px;width:28px;height:24px;border-radius:3px;"></div>
<div class="tb" style="left:1310px;top:689px;width:28px;height:24px;border-radius:3px;"></div>
<div class="tb" style="left:1310px;top:716px;width:28px;height:24px;border-radius:3px;"></div>
<div class="tb" style="left:1310px;top:743px;width:28px;height:24px;border-radius:3px;"></div>
<div class="tb" style="left:1310px;top:770px;width:28px;height:24px;border-radius:3px;opacity:.7;"></div>
<span class="d" style="left:1350.6px;top:660px;letter-spacing:-0.43px;">Szélesség</span>
<div style="left:1351px;top:674px;width:105px;height:20px;background:#fff;border:1px solid #e2e3ea;border-radius:2px;"></div>
<span class="d" style="left:1356.8px;top:679px;letter-spacing:-0.52px;">400 mm</span>
<svg style="left:1443px;top:683px" width="8" height="4" viewBox="0 0 8 4"><path d="M0 0h8l-4 4z" fill="#000"/></svg>
<span class="d" style="left:1350.6px;top:699px;letter-spacing:-0.38px;">Magasság</span>
<div style="left:1351px;top:713px;width:105px;height:20px;background:#fff;border:1px solid #e2e3ea;border-radius:2px;"></div>
<span class="d" style="left:1356.8px;top:718px;letter-spacing:-0.52px;">600 mm</span>
<svg style="left:1443px;top:722px" width="8" height="4" viewBox="0 0 8 4"><path d="M0 0h8l-4 4z" fill="#000"/></svg>
<span class="d" style="left:1351.4px;top:743px;letter-spacing:-0.08px;">Profil átméretezés</span>
<div style="left:1352px;top:757px;width:105px;height:21px;border-radius:3px;border:1px solid #707070;background:linear-gradient(#f2f2f2,#ebebeb 50%,#dddddd 50%,#cfcfcf);"></div>
<span class="d" style="left:1356px;top:762px;letter-spacing:-0.12px;">Átméretezés</span>
<svg style="left:1444px;top:766px" width="8" height="4" viewBox="0 0 8 4"><path d="M0 0h8l-4 4z" fill="#000"/></svg>
<svg style="left:455px;top:610px" width="1010" height="190" viewBox="455 610 1010 190"><g transform="translate(464,618)"><path d="M3 5l11-4 1 1v17l-11 5-1-1z" fill="#a8612a" stroke="#222" stroke-width=".6"/><path d="M6 6l10-3.500v17l-10 4.500z" fill="#22c3dc" stroke="#333" stroke-width=".6"/></g><g transform="translate(494,618)"><path d="M3 5l11-4 1 1v17l-11 5-1-1z" fill="#22c3dc" stroke="#222" stroke-width=".6"/><path d="M6 6l10-3.500v17l-10 4.500z" fill="#a8612a" stroke="#333" stroke-width=".6"/></g><path d="M533 626v9h20v-9h-2v5h-16v-5z" fill="#22c3dc" stroke="#1a7f92" stroke-width=".6"/><path d="M533 633h20v4h-20z" fill="#a8612a"/><rect x="562" y="624" width="4" height="12" fill="#a8612a"/><rect x="579" y="624" width="4" height="12" fill="#a8612a"/><rect x="566" y="628" width="13" height="4" fill="#22c3dc" stroke="#1a7f92" stroke-width=".5"/><path d="M591 626h8l3 5h5l2-5h5v11h-23z" fill="#a8612a"/><path d="M599 626l3 5h5l2-5" fill="none" stroke="#22c3dc" stroke-width="1.600"/><path d="M621 629h23v8h-23z" fill="#a8612a"/><path d="M629 629l5-5h3v5z" fill="#22c3dc"/><path d="M622 632l4-3M626 634l6-5M631 636l8-7M637 636l6-5" stroke="#7a4318" stroke-width=".7"/><path d="M667 619c8 2 8 20 0 23l2 1c11-3 11-22 0-25z" fill="#777" stroke="#222" stroke-width=".8"/><path d="M666 618h4v3h-4zM666 640h4v3h-4z" fill="#333"/><path d="M703 620h17v15l-4 5h-13z" fill="#fff" stroke="#999" stroke-width=".7"/><path d="M716 640v-5h4z" fill="#ddd" stroke="#999" stroke-width=".5"/><path d="M703 638l13-16 3 2.500-13 16-4 1z" fill="#e8c01a" stroke="#5a4a00" stroke-width=".8"/><path d="M702 641.500l1-3.500 3 2.500z" fill="#222"/><rect x="735.500" y="622.500" width="13" height="13" fill="#4a4fc4" stroke="#2a2e8c"/><rect x="738" y="623" width="8" height="5" fill="#f2f2f8"/><rect x="738" y="630" width="8" height="5.500" fill="#d0d2ea"/><rect x="739.500" y="631" width="3" height="4" fill="#3b3f9e"/><path d="M1315 626l4-4h9v9l-4 4h-9z" fill="#f4e27a" stroke="#222" stroke-width="1"/><path d="M1315 626h9v9M1324 626l4-4" fill="none" stroke="#222" stroke-width="1"/><path d="M1347 624v5h5l-2-2c2-1.500 5-.5 5 2s-2 4-4 5c4-.5 7-3 6-7-1-3.500-5-4.500-8-2z" fill="#7f9fdc"/><path d="M1384 624v5h-5l2-2c-2-1.500-5-.5-5 2s2 4 4 5c-4-.5-7-3-6-7 1-3.500 5-4.500 8-2z" fill="#7f9fdc"/><circle cx="1422" cy="625" r="5" fill="#e8f2fb" stroke="#555" stroke-width="1.300"/><path d="M1418 629l-5 5" stroke="#333" stroke-width="2.200"/><path d="M1423 632h6M1426 629v6" stroke="#1c4fa8" stroke-width="1.800"/><circle cx="1449" cy="625" r="5" fill="#e8f2fb" stroke="#555" stroke-width="1.300"/><path d="M1445 629l-5 5" stroke="#333" stroke-width="2.200"/><path d="M1450 632h6" stroke="#1c4fa8" stroke-width="1.800"/><g transform="translate(467,665)"><path d="M3 5l11-4 1 1v17l-11 5-1-1z" fill="#22c3dc" stroke="#222" stroke-width=".6"/><path d="M6 6l10-3.500v17l-10 4.500z" fill="#a8612a" stroke="#333" stroke-width=".6"/></g><g transform="translate(467,698)"><path d="M3 5l11-4 1 1v17l-11 5-1-1z" fill="#a8612a" stroke="#222" stroke-width=".6"/><path d="M6 6l10-3.500v17l-10 4.500z" fill="#22c3dc" stroke="#333" stroke-width=".6"/></g><g transform="translate(478,709)"><ellipse cx="6" cy="6" rx="5.500" ry="3.800" fill="#d9d9d9" stroke="#333" stroke-width=".8" transform="rotate(30 6 6)"/><ellipse cx="6.500" cy="5.500" rx="3" ry="2" fill="#fff" stroke="#555" stroke-width=".6" transform="rotate(30 6 6)"/><path d="M0 7c-2 2-2 5 0 6" stroke="#2a55e8" stroke-width="1.600" fill="none"/></g><g transform="translate(467,731)"><path d="M3 5l11-4 1 1v17l-11 5-1-1z" fill="#a8612a" stroke="#222" stroke-width=".6"/><path d="M6 6l10-3.500v17l-10 4.500z" fill="#1f8fd0" stroke="#333" stroke-width=".6"/></g><g transform="translate(478,742)"><ellipse cx="6" cy="6" rx="5.500" ry="3.800" fill="#d9d9d9" stroke="#333" stroke-width=".8" transform="rotate(30 6 6)"/><ellipse cx="6.500" cy="5.500" rx="3" ry="2" fill="#fff" stroke="#555" stroke-width=".6" transform="rotate(30 6 6)"/><path d="M0 7c-2 2-2 5 0 6" stroke="#2a55e8" stroke-width="1.600" fill="none"/></g><g transform="translate(467,764)"><path d="M3 5l11-4 1 1v17l-11 5-1-1z" fill="#22c3dc" stroke="#222" stroke-width=".6"/><path d="M6 6l10-3.500v17l-10 4.500z" fill="#a8612a" stroke="#333" stroke-width=".6"/></g><g transform="translate(478,775)"><ellipse cx="6" cy="6" rx="5.500" ry="3.800" fill="#d9d9d9" stroke="#333" stroke-width=".8" transform="rotate(30 6 6)"/><ellipse cx="6.500" cy="5.500" rx="3" ry="2" fill="#fff" stroke="#555" stroke-width=".6" transform="rotate(30 6 6)"/><path d="M0 7c-2 2-2 5 0 6" stroke="#2a55e8" stroke-width="1.600" fill="none"/></g><path d="M1321 667h6v4h4v6h-4v4h-6v-4h-4v-6h4z" fill="#1f5fc0" stroke="#0f3a86" stroke-width=".8"/><path d="M1324 692l2.800 5.800 6.200.700-4.600 4.300 1.200 6.200-5.600-3.100-5.600 3.100 1.200-6.200-4.600-4.300 6.200-.700z" fill="#fbc02a" stroke="#d08a00" stroke-width=".9"/><g fill="#222"><rect x="1322" y="718" width="4" height="5" transform="rotate(0 1324 728)"/><rect x="1322" y="718" width="4" height="5" transform="rotate(45 1324 728)"/><rect x="1322" y="718" width="4" height="5" transform="rotate(90 1324 728)"/><rect x="1322" y="718" width="4" height="5" transform="rotate(135 1324 728)"/><rect x="1322" y="718" width="4" height="5" transform="rotate(180 1324 728)"/><rect x="1322" y="718" width="4" height="5" transform="rotate(225 1324 728)"/><rect x="1322" y="718" width="4" height="5" transform="rotate(270 1324 728)"/><rect x="1322" y="718" width="4" height="5" transform="rotate(315 1324 728)"/></g><circle cx="1324" cy="728" r="7.500" fill="#222"/><circle cx="1324" cy="728" r="4.500" fill="#e9e9e9"/><circle cx="1324" cy="728" r="2.800" fill="#222"/><path d="M1316 761l2-5 11-10 3 3-11 10z" fill="#f7a81a" stroke="#7a5200" stroke-width=".8"/><path d="M1329 746l1.500-1.500c1-1 4 2 3 3l-1.500 1.500z" fill="#e0303a"/><path d="M1316 761l2-5 3 3z" fill="#333"/><g opacity=".55"><rect x="1317.500" y="775.500" width="13" height="13" fill="#6a6fd4" stroke="#4a4eac"/><rect x="1320" y="776" width="8" height="5" fill="#f2f2f8"/><rect x="1320" y="783" width="8" height="5.500" fill="#d0d2ea"/></g></svg>
<div style="left:1051px;top:843px;width:13px;height:13px;background:linear-gradient(135deg,#dcdfe4,#fff);border:1px solid #8e8f8f;"></div>
<svg style="left:1052px;top:844px" width="11" height="11" viewBox="0 0 11 11"><path d="M2 4.500l2.500 4 4.500-7.500" stroke="#2a3a9a" stroke-width="1.700" fill="none"/></svg>
<span class="d" style="left:1067px;top:844px;letter-spacing:-0.15px;">Automatikus frissítés a lapon</span>
<div class="tb" style="left:1242px;top:838px;width:24px;height:24px;border-radius:3px;border-color:#8a8a8a;"></div>
<svg style="left:1245px;top:841px" width="18" height="18" viewBox="0 0 18 18"><path d="M2.500 8a6.500 6.500 0 0 1 11.500-3.500" fill="none" stroke="#111" stroke-width="2.400"/><path d="M11.500 6.500l5.500.5-.5-5.500z" fill="#111"/><path d="M15.500 10a6.500 6.500 0 0 1-11.500 3.500" fill="none" stroke="#111" stroke-width="2.400"/><path d="M6.500 11.500l-5.500-.5.500 5.500z" fill="#111"/></svg>
<div style="left:1276px;top:838px;width:89px;height:24px;border:1px solid #3c7fb1;border-radius:3px;background:linear-gradient(#eaf6fd 0%,#d9f0fc 48%,#bee6fd 52%,#a7d9f5 100%);box-shadow:0 0 0 1px #48d8fb inset;"></div>
<span class="t" style="left:1312px;top:844px;font-size:11.5px;letter-spacing:-0.86px;">OK</span>
<div style="left:1374px;top:838px;width:90px;height:24px;border:1px solid #707070;border-radius:3px;background:linear-gradient(#f2f2f2,#ebebeb 48%,#dddddd 52%,#cfcfcf);box-shadow:0 0 0 1px #fcfcfc inset;"></div>
<span class="t" style="left:1402.3px;top:844px;font-size:11.5px;letter-spacing:-0.69px;">Mégse</span>
<svg style="left:1452px;top:856px" width="12" height="10" viewBox="0 0 12 10"><path d="M2 9l8-7M6 9l5-4.500M9.500 9l2-1.800" stroke="#b8b8b8" stroke-width="1"/></svg>
</body></html>
